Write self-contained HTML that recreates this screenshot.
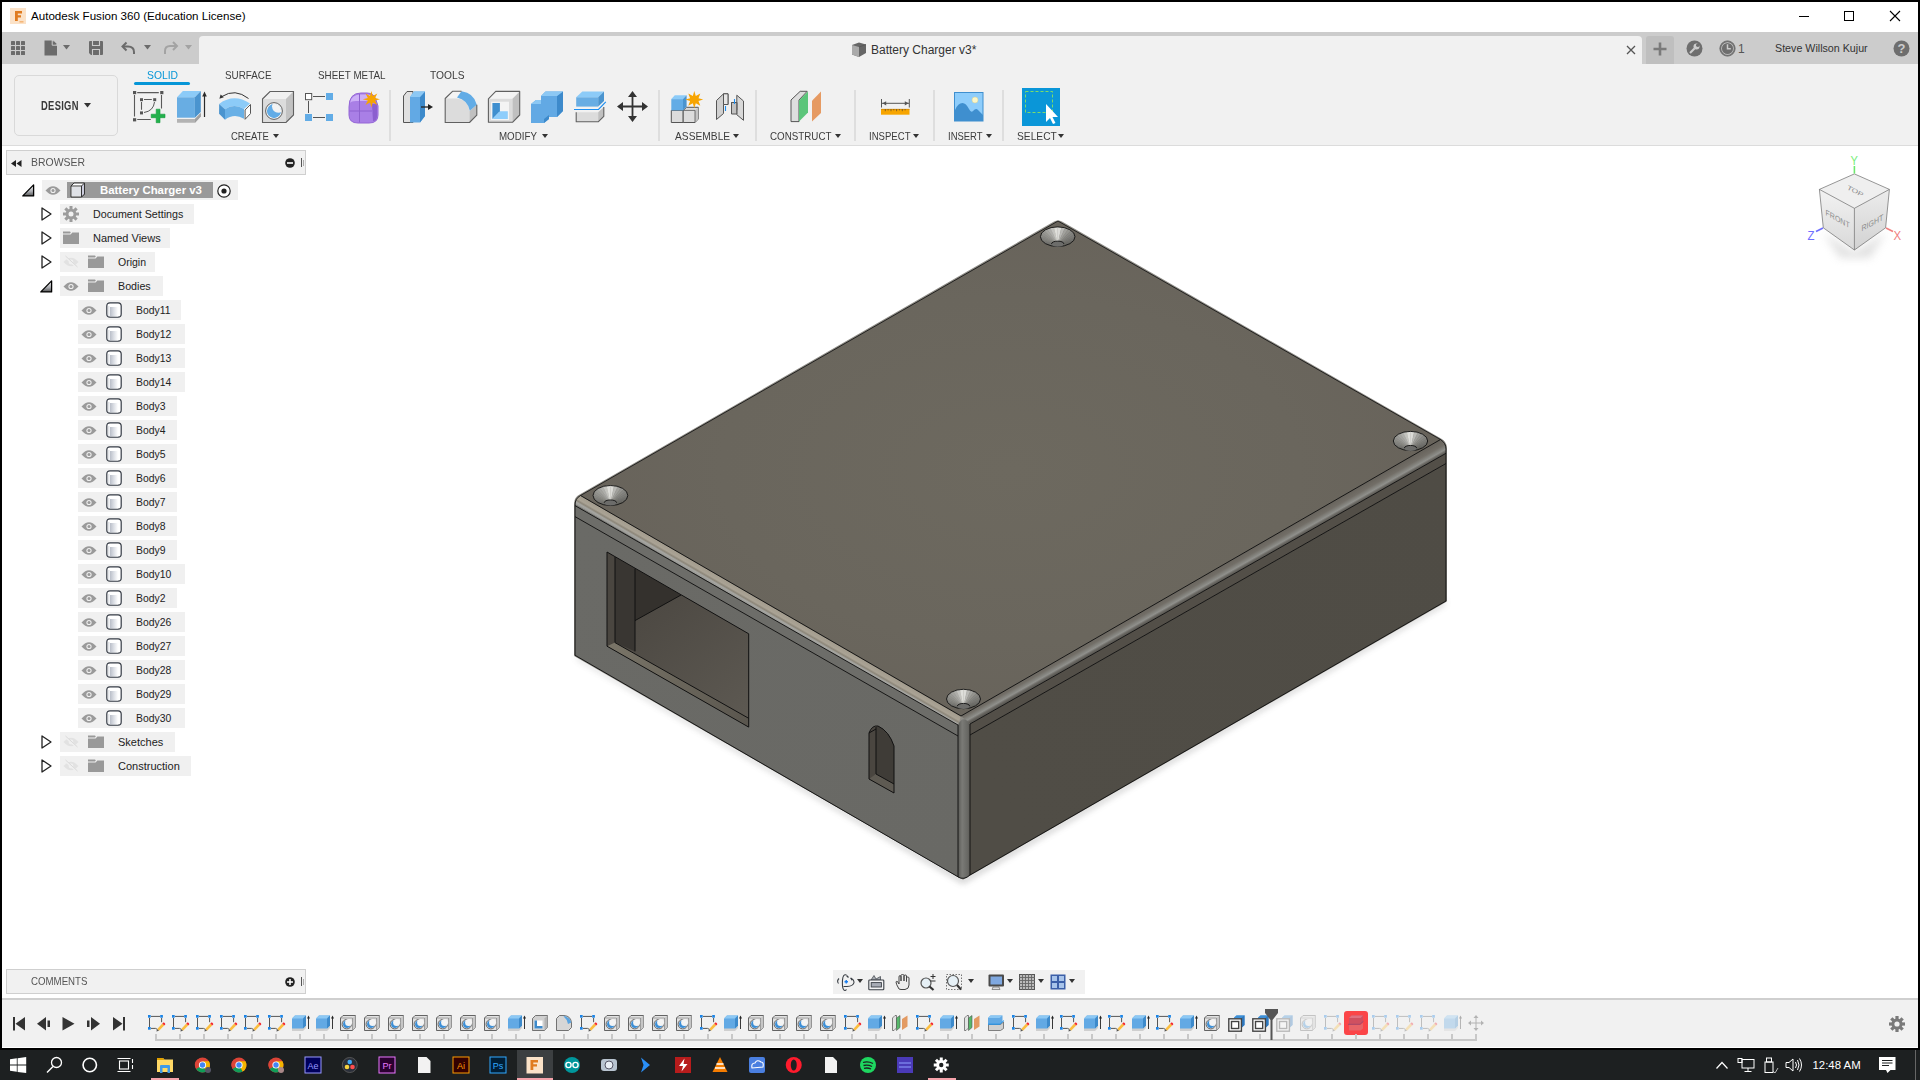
<!DOCTYPE html>
<html><head><meta charset="utf-8">
<style>
*{margin:0;padding:0;box-sizing:border-box}
html,body{width:1920px;height:1080px;overflow:hidden;background:#000;font-family:"Liberation Sans",sans-serif}
.a{position:absolute;overflow:visible}
.t{position:absolute;white-space:nowrap;line-height:1}
.rl{position:absolute;white-space:nowrap;line-height:1;font-size:11px;color:#3c3c3c;transform-origin:0 0}
.row{position:absolute;background:#f0f0f0;height:20px}
.tx{position:absolute;font-size:11px;color:#222;white-space:nowrap;line-height:1}
.sep{position:absolute;width:2px;background:#dedede;top:90px;height:51px}
</style></head><body>

<div class="a" style="left:2px;top:2px;width:1916px;height:1046px;background:#fff"></div>
<div class="a" style="left:2px;top:32px;width:1916px;height:32px;background:#cccccc"></div>
<div class="a" style="left:199px;top:36px;width:1443px;height:28px;background:#f1f1f1;border-radius:4px 4px 0 0"></div>
<div class="a" style="left:1646px;top:36px;width:28px;height:28px;background:#bfbfbf;border-radius:3px 3px 0 0"></div>
<div class="a" style="left:2px;top:64px;width:1916px;height:81px;background:#f1f1f1"></div>
<div class="a" style="left:2px;top:145px;width:1916px;height:1px;background:#dcdcdc"></div>
<div class="a" style="left:2px;top:998px;width:1916px;height:2px;background:#cfcfcf"></div>
<div class="a" style="left:2px;top:1000px;width:1916px;height:47px;background:#f1f1f1"></div>
<div class="a" style="left:0;top:1050px;width:1920px;height:30px;background:#1d2021"></div>

<svg class="a" style="left:0;top:0" width="1920" height="1080" viewBox="0 0 1920 1080">
<defs>
 <filter id="blur3" x="-20%" y="-20%" width="140%" height="140%"><feGaussianBlur stdDeviation="3"/></filter>
 <radialGradient id="gTop" gradientUnits="userSpaceOnUse" cx="1010" cy="470" r="480" gradientTransform="translate(1010 470) scale(1 .6) translate(-1010 -470)"><stop offset="0" stop-color="#6d695f"/><stop offset="0.6" stop-color="#6a665d"/><stop offset="1" stop-color="#67625a"/></radialGradient>
 <linearGradient id="gFilL" gradientUnits="userSpaceOnUse" x1="760" y1="599.2" x2="754.6" y2="608.5"><stop offset="0" stop-color="#858073"/><stop offset="0.12" stop-color="#a49d8f"/><stop offset="0.45" stop-color="#aaa395"/><stop offset="0.62" stop-color="#8c8679"/><stop offset="0.78" stop-color="#a6a6a2"/><stop offset="0.95" stop-color="#9a9a96"/><stop offset="1" stop-color="#7a7a76"/></linearGradient>
 <linearGradient id="gFilR" gradientUnits="userSpaceOnUse" x1="1200" y1="577.9" x2="1206.2" y2="588.85"><stop offset="0" stop-color="#69655e"/><stop offset="0.35" stop-color="#726e67"/><stop offset="0.62" stop-color="#878782"/><stop offset="0.72" stop-color="#90908c"/><stop offset="0.88" stop-color="#6a6863"/><stop offset="1" stop-color="#5c5a55"/></linearGradient>
 <linearGradient id="gWallL" gradientUnits="userSpaceOnUse" x1="575" y1="520" x2="963" y2="880">
  <stop offset="0" stop-color="#6a6a66"/><stop offset="1" stop-color="#696965"/>
 </linearGradient>
 <linearGradient id="gWallR" gradientUnits="userSpaceOnUse" x1="963" y1="740" x2="1446" y2="460">
  <stop offset="0" stop-color="#504d46"/><stop offset="1" stop-color="#4f4c45"/>
 </linearGradient>
 <linearGradient id="gCorner" x1="0" y1="0" x2="1" y2="0">
  <stop offset="0" stop-color="#5a5a56"/><stop offset="0.35" stop-color="#7a7a76"/><stop offset="0.8" stop-color="#686864"/><stop offset="1" stop-color="#5c5a55"/>
 </linearGradient>
 <linearGradient id="gCs" x1="0" y1="0" x2="1" y2="0"><stop offset="0" stop-color="#55534e"/><stop offset="0.2" stop-color="#8f8d87"/><stop offset="0.42" stop-color="#c9c8c3"/><stop offset="0.52" stop-color="#f0f0ec"/><stop offset="0.62" stop-color="#b9b7b1"/><stop offset="0.8" stop-color="#7f7d77"/><stop offset="1" stop-color="#5a5853"/></linearGradient>
 <linearGradient id="gFloor" gradientUnits="userSpaceOnUse" x1="640" y1="600" x2="748" y2="720">
  <stop offset="0" stop-color="#4c4842"/><stop offset="1" stop-color="#5d5952"/>
 </linearGradient>
 <linearGradient id="gSill" gradientUnits="userSpaceOnUse" x1="607" y1="644" x2="748" y2="724">
  <stop offset="0" stop-color="#7a7568"/><stop offset="1" stop-color="#5a564e"/>
 </linearGradient>
</defs>
<!-- shadow -->
<polygon points="578,659.5 963,883.5 1444,605 1446,600 963,878.5 575,655.3" fill="#808080" opacity="0.45" filter="url(#blur3)"/>
<!-- back silhouette outline halo -->
<path d="M1054,221.4 Q1058,219.6 1062,221.4 L1441,438.6 Q1447,442 1446.9,448 L1446.9,601.5 L963,879.8 L574.1,656 L574.1,503 Q574.3,497.5 579.6,494.6 Z" fill="#8e8c86"/>
<!-- walls -->
<polygon points="575,516.6 958,736 958,877 575,655.3" fill="url(#gWallL)"/>
<polygon points="970,735 1446,463.5 1446,601 970,875" fill="url(#gWallR)"/>
<!-- lid band -->
<polygon points="575,505.6 958,725 958,736 575,516.6" fill="#6d6d69"/>
<polygon points="970,724 1446,453.3 1446,463.5 970,735" fill="#534f48"/>
<!-- fillet band -->
<path d="M580.5,495.5 L961,716 L958,725 L575,505.6 Q575,498.5 580.5,495.5Z" fill="url(#gFilL)"/>
<path d="M961,716 L1440.5,439.5 Q1446,443 1446,449 L1446,453.3 L970,724Z" fill="url(#gFilR)"/>
<!-- corner strip -->
<path d="M958,725 Q963,714 970,724 L970,875 Q964,880.5 958,877 Z" fill="url(#gCorner)"/>
<!-- top face -->
<polygon points="1058,221 1440.5,439.5 961,716 580.5,495.5" fill="url(#gTop)"/>
<!-- edge lines -->
<g fill="none" stroke="#111" stroke-width="0.95" stroke-linejoin="round">
 <polyline points="580.5,495.5 1058,221 1440.5,439.5" stroke-width=".85"/>
 <polyline points="580.5,495.5 961,716 1440.5,439.5"/>
 <polyline points="575,505.6 958,725"/><polyline points="970,724 1446,453.3"/>
 <polyline points="575,516.6 958,736"/><polyline points="970,735 1446,463.5"/>
 <path d="M580.5,495.5 Q575,498.5 575,505 L575,655.3 L958,876.8"/><path d="M970,875 L1446,601 L1446,449 Q1446,443 1440.5,439.5"/>
 <line x1="958" y1="725" x2="958" y2="877"/><line x1="970" y1="724" x2="970" y2="875"/>
 <path d="M958,877 Q964,880.5 970,875"/>
</g>
<!-- rect opening -->
<polygon points="607,552 748.7,633.8 748.7,727.1 607,646.2" fill="url(#gFloor)"/>
<polygon points="615,557 681,595 635,620.6 635,568.8" fill="#34312d"/>
<polygon points="607,552 615,557 615,642.6 607,646.2" fill="#4a4640"/>
<polygon points="615,557 635,568.8 635,651.4 615,642.6" fill="#393632"/>
<polygon points="607,646.2 748.7,727.1 748.7,718.3 615,642.6" fill="url(#gSill)"/>
<g fill="none" stroke="#111" stroke-width="1">
 <polygon points="607,552 748.7,633.8 748.7,727.1 607,646.2"/>
 <polyline points="615,557 615,642.6 748.7,718.3"/>
 <polyline points="635,568.8 635,651.4"/>
 <polyline points="635,620.6 681,595"/>
</g>
<!-- slot -->
<path d="M869,779 L869,733 Q872,725 878,726 Q889,731 894,746 L894,793 Z" fill="#4a4640"/>
<path d="M876,728 L876,774 L894,784 L894,746 Q889,731 878,726 Z" fill="#3f3c37"/>
<polygon points="869,779 876,774 894,784 894,793" fill="#5e5a52"/>
<g fill="none" stroke="#111" stroke-width="1">
 <path d="M869,779 L869,733 Q872,725 878,726 Q889,731 894,746 L894,793 Z"/>
 <polyline points="876,727 876,774 894,784"/>
 <line x1="869" y1="733" x2="876" y2="729"/>
</g>
<!-- countersinks -->
<clipPath id="csc1"><ellipse cx="1057.7" cy="236.7" rx="17.3" ry="9.8"/></clipPath>
<g clip-path="url(#csc1)">
<path d="M1057.7,244.2L1057.7,256.3L1051.7,256.0Z" fill="#62625e" stroke="#62625e" stroke-width=".3"/>
<path d="M1057.7,244.2L1051.7,256.0L1045.9,255.1Z" fill="#646460" stroke="#646460" stroke-width=".3"/>
<path d="M1057.7,244.2L1045.9,255.1L1040.4,253.7Z" fill="#666662" stroke="#666662" stroke-width=".3"/>
<path d="M1057.7,244.2L1040.4,253.7L1035.5,251.7Z" fill="#686864" stroke="#686864" stroke-width=".3"/>
<path d="M1057.7,244.2L1035.5,251.7L1031.2,249.3Z" fill="#6a6a66" stroke="#6a6a66" stroke-width=".3"/>
<path d="M1057.7,244.2L1031.2,249.3L1027.7,246.5Z" fill="#6d6d69" stroke="#6d6d69" stroke-width=".3"/>
<path d="M1057.7,244.2L1027.7,246.5L1025.2,243.4Z" fill="#71716d" stroke="#71716d" stroke-width=".3"/>
<path d="M1057.7,244.2L1025.2,243.4L1023.6,240.1Z" fill="#747470" stroke="#747470" stroke-width=".3"/>
<path d="M1057.7,244.2L1023.6,240.1L1023.1,236.7Z" fill="#787874" stroke="#787874" stroke-width=".3"/>
<path d="M1057.7,244.2L1023.1,236.7L1023.6,233.3Z" fill="#7d7d79" stroke="#7d7d79" stroke-width=".3"/>
<path d="M1057.7,244.2L1023.6,233.3L1025.2,230.0Z" fill="#848480" stroke="#848480" stroke-width=".3"/>
<path d="M1057.7,244.2L1025.2,230.0L1027.7,226.9Z" fill="#8a8a86" stroke="#8a8a86" stroke-width=".3"/>
<path d="M1057.7,244.2L1027.7,226.9L1031.2,224.1Z" fill="#91918d" stroke="#91918d" stroke-width=".3"/>
<path d="M1057.7,244.2L1031.2,224.1L1035.5,221.7Z" fill="#989894" stroke="#989894" stroke-width=".3"/>
<path d="M1057.7,244.2L1035.5,221.7L1040.4,219.7Z" fill="#a3a39f" stroke="#a3a39f" stroke-width=".3"/>
<path d="M1057.7,244.2L1040.4,219.7L1045.9,218.3Z" fill="#aeaeaa" stroke="#aeaeaa" stroke-width=".3"/>
<path d="M1057.7,244.2L1045.9,218.3L1051.7,217.4Z" fill="#c3c3bf" stroke="#c3c3bf" stroke-width=".3"/>
<path d="M1057.7,244.2L1051.7,217.4L1057.7,217.1Z" fill="#dfdfdb" stroke="#dfdfdb" stroke-width=".3"/>
<path d="M1057.7,244.2L1057.7,217.1L1063.7,217.4Z" fill="#dcdcd8" stroke="#dcdcd8" stroke-width=".3"/>
<path d="M1057.7,244.2L1063.7,217.4L1069.5,218.3Z" fill="#b9b9b5" stroke="#b9b9b5" stroke-width=".3"/>
<path d="M1057.7,244.2L1069.5,218.3L1075.0,219.7Z" fill="#a1a19d" stroke="#a1a19d" stroke-width=".3"/>
<path d="M1057.7,244.2L1075.0,219.7L1079.9,221.7Z" fill="#949490" stroke="#949490" stroke-width=".3"/>
<path d="M1057.7,244.2L1079.9,221.7L1084.2,224.1Z" fill="#888884" stroke="#888884" stroke-width=".3"/>
<path d="M1057.7,244.2L1084.2,224.1L1087.7,226.9Z" fill="#82827e" stroke="#82827e" stroke-width=".3"/>
<path d="M1057.7,244.2L1087.7,226.9L1090.2,230.0Z" fill="#7c7c78" stroke="#7c7c78" stroke-width=".3"/>
<path d="M1057.7,244.2L1090.2,230.0L1091.8,233.3Z" fill="#767672" stroke="#767672" stroke-width=".3"/>
<path d="M1057.7,244.2L1091.8,233.3L1092.3,236.7Z" fill="#70706c" stroke="#70706c" stroke-width=".3"/>
<path d="M1057.7,244.2L1092.3,236.7L1091.8,240.1Z" fill="#6c6c68" stroke="#6c6c68" stroke-width=".3"/>
<path d="M1057.7,244.2L1091.8,240.1L1090.2,243.4Z" fill="#6a6a66" stroke="#6a6a66" stroke-width=".3"/>
<path d="M1057.7,244.2L1090.2,243.4L1087.7,246.5Z" fill="#686864" stroke="#686864" stroke-width=".3"/>
<path d="M1057.7,244.2L1087.7,246.5L1084.2,249.3Z" fill="#666662" stroke="#666662" stroke-width=".3"/>
<path d="M1057.7,244.2L1084.2,249.3L1079.9,251.7Z" fill="#646460" stroke="#646460" stroke-width=".3"/>
<path d="M1057.7,244.2L1079.9,251.7L1075.0,253.7Z" fill="#63635f" stroke="#63635f" stroke-width=".3"/>
<path d="M1057.7,244.2L1075.0,253.7L1069.5,255.1Z" fill="#63635f" stroke="#63635f" stroke-width=".3"/>
<path d="M1057.7,244.2L1069.5,255.1L1063.7,256.0Z" fill="#62625e" stroke="#62625e" stroke-width=".3"/>
<path d="M1057.7,244.2L1063.7,256.0L1057.7,256.3Z" fill="#62625e" stroke="#62625e" stroke-width=".3"/>
</g>
<ellipse cx="1057.7" cy="236.7" rx="17.3" ry="9.8" fill="none" stroke="#111" stroke-width=".9"/>
<ellipse cx="1057.7" cy="243.89999999999998" rx="6.2" ry="2.8" fill="#6c6c6a"/>
<path d="M1051.5,243.89999999999998 A6.2,2.8 0 0 1 1063.9,243.89999999999998" fill="none" stroke="#111" stroke-width=".9"/>
<clipPath id="csc2"><ellipse cx="610.4" cy="495.5" rx="17.4" ry="10"/></clipPath>
<g clip-path="url(#csc2)">
<path d="M610.4,503.0L610.4,515.5L604.4,515.2Z" fill="#62625e" stroke="#62625e" stroke-width=".3"/>
<path d="M610.4,503.0L604.4,515.2L598.5,514.3Z" fill="#646460" stroke="#646460" stroke-width=".3"/>
<path d="M610.4,503.0L598.5,514.3L593.0,512.8Z" fill="#666662" stroke="#666662" stroke-width=".3"/>
<path d="M610.4,503.0L593.0,512.8L588.0,510.8Z" fill="#686864" stroke="#686864" stroke-width=".3"/>
<path d="M610.4,503.0L588.0,510.8L583.7,508.4Z" fill="#6a6a66" stroke="#6a6a66" stroke-width=".3"/>
<path d="M610.4,503.0L583.7,508.4L580.3,505.5Z" fill="#6d6d69" stroke="#6d6d69" stroke-width=".3"/>
<path d="M610.4,503.0L580.3,505.5L577.7,502.3Z" fill="#71716d" stroke="#71716d" stroke-width=".3"/>
<path d="M610.4,503.0L577.7,502.3L576.1,499.0Z" fill="#747470" stroke="#747470" stroke-width=".3"/>
<path d="M610.4,503.0L576.1,499.0L575.6,495.5Z" fill="#787874" stroke="#787874" stroke-width=".3"/>
<path d="M610.4,503.0L575.6,495.5L576.1,492.0Z" fill="#7d7d79" stroke="#7d7d79" stroke-width=".3"/>
<path d="M610.4,503.0L576.1,492.0L577.7,488.7Z" fill="#848480" stroke="#848480" stroke-width=".3"/>
<path d="M610.4,503.0L577.7,488.7L580.3,485.5Z" fill="#8a8a86" stroke="#8a8a86" stroke-width=".3"/>
<path d="M610.4,503.0L580.3,485.5L583.7,482.6Z" fill="#91918d" stroke="#91918d" stroke-width=".3"/>
<path d="M610.4,503.0L583.7,482.6L588.0,480.2Z" fill="#989894" stroke="#989894" stroke-width=".3"/>
<path d="M610.4,503.0L588.0,480.2L593.0,478.2Z" fill="#a3a39f" stroke="#a3a39f" stroke-width=".3"/>
<path d="M610.4,503.0L593.0,478.2L598.5,476.7Z" fill="#aeaeaa" stroke="#aeaeaa" stroke-width=".3"/>
<path d="M610.4,503.0L598.5,476.7L604.4,475.8Z" fill="#c3c3bf" stroke="#c3c3bf" stroke-width=".3"/>
<path d="M610.4,503.0L604.4,475.8L610.4,475.5Z" fill="#dfdfdb" stroke="#dfdfdb" stroke-width=".3"/>
<path d="M610.4,503.0L610.4,475.5L616.4,475.8Z" fill="#dcdcd8" stroke="#dcdcd8" stroke-width=".3"/>
<path d="M610.4,503.0L616.4,475.8L622.3,476.7Z" fill="#b9b9b5" stroke="#b9b9b5" stroke-width=".3"/>
<path d="M610.4,503.0L622.3,476.7L627.8,478.2Z" fill="#a1a19d" stroke="#a1a19d" stroke-width=".3"/>
<path d="M610.4,503.0L627.8,478.2L632.8,480.2Z" fill="#949490" stroke="#949490" stroke-width=".3"/>
<path d="M610.4,503.0L632.8,480.2L637.1,482.6Z" fill="#888884" stroke="#888884" stroke-width=".3"/>
<path d="M610.4,503.0L637.1,482.6L640.5,485.5Z" fill="#82827e" stroke="#82827e" stroke-width=".3"/>
<path d="M610.4,503.0L640.5,485.5L643.1,488.7Z" fill="#7c7c78" stroke="#7c7c78" stroke-width=".3"/>
<path d="M610.4,503.0L643.1,488.7L644.7,492.0Z" fill="#767672" stroke="#767672" stroke-width=".3"/>
<path d="M610.4,503.0L644.7,492.0L645.2,495.5Z" fill="#70706c" stroke="#70706c" stroke-width=".3"/>
<path d="M610.4,503.0L645.2,495.5L644.7,499.0Z" fill="#6c6c68" stroke="#6c6c68" stroke-width=".3"/>
<path d="M610.4,503.0L644.7,499.0L643.1,502.3Z" fill="#6a6a66" stroke="#6a6a66" stroke-width=".3"/>
<path d="M610.4,503.0L643.1,502.3L640.5,505.5Z" fill="#686864" stroke="#686864" stroke-width=".3"/>
<path d="M610.4,503.0L640.5,505.5L637.1,508.4Z" fill="#666662" stroke="#666662" stroke-width=".3"/>
<path d="M610.4,503.0L637.1,508.4L632.8,510.8Z" fill="#646460" stroke="#646460" stroke-width=".3"/>
<path d="M610.4,503.0L632.8,510.8L627.8,512.8Z" fill="#63635f" stroke="#63635f" stroke-width=".3"/>
<path d="M610.4,503.0L627.8,512.8L622.3,514.3Z" fill="#63635f" stroke="#63635f" stroke-width=".3"/>
<path d="M610.4,503.0L622.3,514.3L616.4,515.2Z" fill="#62625e" stroke="#62625e" stroke-width=".3"/>
<path d="M610.4,503.0L616.4,515.2L610.4,515.5Z" fill="#62625e" stroke="#62625e" stroke-width=".3"/>
</g>
<ellipse cx="610.4" cy="495.5" rx="17.4" ry="10" fill="none" stroke="#111" stroke-width=".9"/>
<ellipse cx="610.4" cy="502.7" rx="6.2" ry="2.8" fill="#6c6c6a"/>
<path d="M604.1999999999999,502.7 A6.2,2.8 0 0 1 616.6,502.7" fill="none" stroke="#111" stroke-width=".9"/>
<clipPath id="csc3"><ellipse cx="1410.5" cy="441" rx="17.2" ry="9.6"/></clipPath>
<g clip-path="url(#csc3)">
<path d="M1410.5,448.5L1410.5,460.2L1404.5,459.9Z" fill="#62625e" stroke="#62625e" stroke-width=".3"/>
<path d="M1410.5,448.5L1404.5,459.9L1398.7,459.0Z" fill="#646460" stroke="#646460" stroke-width=".3"/>
<path d="M1410.5,448.5L1398.7,459.0L1393.3,457.6Z" fill="#666662" stroke="#666662" stroke-width=".3"/>
<path d="M1410.5,448.5L1393.3,457.6L1388.4,455.7Z" fill="#686864" stroke="#686864" stroke-width=".3"/>
<path d="M1410.5,448.5L1388.4,455.7L1384.1,453.3Z" fill="#6a6a66" stroke="#6a6a66" stroke-width=".3"/>
<path d="M1410.5,448.5L1384.1,453.3L1380.7,450.6Z" fill="#6d6d69" stroke="#6d6d69" stroke-width=".3"/>
<path d="M1410.5,448.5L1380.7,450.6L1378.2,447.6Z" fill="#71716d" stroke="#71716d" stroke-width=".3"/>
<path d="M1410.5,448.5L1378.2,447.6L1376.6,444.3Z" fill="#747470" stroke="#747470" stroke-width=".3"/>
<path d="M1410.5,448.5L1376.6,444.3L1376.1,441.0Z" fill="#787874" stroke="#787874" stroke-width=".3"/>
<path d="M1410.5,448.5L1376.1,441.0L1376.6,437.7Z" fill="#7d7d79" stroke="#7d7d79" stroke-width=".3"/>
<path d="M1410.5,448.5L1376.6,437.7L1378.2,434.4Z" fill="#848480" stroke="#848480" stroke-width=".3"/>
<path d="M1410.5,448.5L1378.2,434.4L1380.7,431.4Z" fill="#8a8a86" stroke="#8a8a86" stroke-width=".3"/>
<path d="M1410.5,448.5L1380.7,431.4L1384.1,428.7Z" fill="#91918d" stroke="#91918d" stroke-width=".3"/>
<path d="M1410.5,448.5L1384.1,428.7L1388.4,426.3Z" fill="#989894" stroke="#989894" stroke-width=".3"/>
<path d="M1410.5,448.5L1388.4,426.3L1393.3,424.4Z" fill="#a3a39f" stroke="#a3a39f" stroke-width=".3"/>
<path d="M1410.5,448.5L1393.3,424.4L1398.7,423.0Z" fill="#aeaeaa" stroke="#aeaeaa" stroke-width=".3"/>
<path d="M1410.5,448.5L1398.7,423.0L1404.5,422.1Z" fill="#c3c3bf" stroke="#c3c3bf" stroke-width=".3"/>
<path d="M1410.5,448.5L1404.5,422.1L1410.5,421.8Z" fill="#dfdfdb" stroke="#dfdfdb" stroke-width=".3"/>
<path d="M1410.5,448.5L1410.5,421.8L1416.5,422.1Z" fill="#dcdcd8" stroke="#dcdcd8" stroke-width=".3"/>
<path d="M1410.5,448.5L1416.5,422.1L1422.3,423.0Z" fill="#b9b9b5" stroke="#b9b9b5" stroke-width=".3"/>
<path d="M1410.5,448.5L1422.3,423.0L1427.7,424.4Z" fill="#a1a19d" stroke="#a1a19d" stroke-width=".3"/>
<path d="M1410.5,448.5L1427.7,424.4L1432.6,426.3Z" fill="#949490" stroke="#949490" stroke-width=".3"/>
<path d="M1410.5,448.5L1432.6,426.3L1436.9,428.7Z" fill="#888884" stroke="#888884" stroke-width=".3"/>
<path d="M1410.5,448.5L1436.9,428.7L1440.3,431.4Z" fill="#82827e" stroke="#82827e" stroke-width=".3"/>
<path d="M1410.5,448.5L1440.3,431.4L1442.8,434.4Z" fill="#7c7c78" stroke="#7c7c78" stroke-width=".3"/>
<path d="M1410.5,448.5L1442.8,434.4L1444.4,437.7Z" fill="#767672" stroke="#767672" stroke-width=".3"/>
<path d="M1410.5,448.5L1444.4,437.7L1444.9,441.0Z" fill="#70706c" stroke="#70706c" stroke-width=".3"/>
<path d="M1410.5,448.5L1444.9,441.0L1444.4,444.3Z" fill="#6c6c68" stroke="#6c6c68" stroke-width=".3"/>
<path d="M1410.5,448.5L1444.4,444.3L1442.8,447.6Z" fill="#6a6a66" stroke="#6a6a66" stroke-width=".3"/>
<path d="M1410.5,448.5L1442.8,447.6L1440.3,450.6Z" fill="#686864" stroke="#686864" stroke-width=".3"/>
<path d="M1410.5,448.5L1440.3,450.6L1436.9,453.3Z" fill="#666662" stroke="#666662" stroke-width=".3"/>
<path d="M1410.5,448.5L1436.9,453.3L1432.6,455.7Z" fill="#646460" stroke="#646460" stroke-width=".3"/>
<path d="M1410.5,448.5L1432.6,455.7L1427.7,457.6Z" fill="#63635f" stroke="#63635f" stroke-width=".3"/>
<path d="M1410.5,448.5L1427.7,457.6L1422.3,459.0Z" fill="#63635f" stroke="#63635f" stroke-width=".3"/>
<path d="M1410.5,448.5L1422.3,459.0L1416.5,459.9Z" fill="#62625e" stroke="#62625e" stroke-width=".3"/>
<path d="M1410.5,448.5L1416.5,459.9L1410.5,460.2Z" fill="#62625e" stroke="#62625e" stroke-width=".3"/>
</g>
<ellipse cx="1410.5" cy="441" rx="17.2" ry="9.6" fill="none" stroke="#111" stroke-width=".9"/>
<ellipse cx="1410.5" cy="448.2" rx="6.2" ry="2.8" fill="#6c6c6a"/>
<path d="M1404.3,448.2 A6.2,2.8 0 0 1 1416.7,448.2" fill="none" stroke="#111" stroke-width=".9"/>
<clipPath id="csc4"><ellipse cx="963.5" cy="699" rx="17" ry="9.7"/></clipPath>
<g clip-path="url(#csc4)">
<path d="M963.5,706.5L963.5,718.4L957.6,718.1Z" fill="#62625e" stroke="#62625e" stroke-width=".3"/>
<path d="M963.5,706.5L957.6,718.1L951.9,717.2Z" fill="#646460" stroke="#646460" stroke-width=".3"/>
<path d="M963.5,706.5L951.9,717.2L946.5,715.8Z" fill="#666662" stroke="#666662" stroke-width=".3"/>
<path d="M963.5,706.5L946.5,715.8L941.6,713.9Z" fill="#686864" stroke="#686864" stroke-width=".3"/>
<path d="M963.5,706.5L941.6,713.9L937.5,711.5Z" fill="#6a6a66" stroke="#6a6a66" stroke-width=".3"/>
<path d="M963.5,706.5L937.5,711.5L934.1,708.7Z" fill="#6d6d69" stroke="#6d6d69" stroke-width=".3"/>
<path d="M963.5,706.5L934.1,708.7L931.6,705.6Z" fill="#71716d" stroke="#71716d" stroke-width=".3"/>
<path d="M963.5,706.5L931.6,705.6L930.0,702.4Z" fill="#747470" stroke="#747470" stroke-width=".3"/>
<path d="M963.5,706.5L930.0,702.4L929.5,699.0Z" fill="#787874" stroke="#787874" stroke-width=".3"/>
<path d="M963.5,706.5L929.5,699.0L930.0,695.6Z" fill="#7d7d79" stroke="#7d7d79" stroke-width=".3"/>
<path d="M963.5,706.5L930.0,695.6L931.6,692.4Z" fill="#848480" stroke="#848480" stroke-width=".3"/>
<path d="M963.5,706.5L931.6,692.4L934.1,689.3Z" fill="#8a8a86" stroke="#8a8a86" stroke-width=".3"/>
<path d="M963.5,706.5L934.1,689.3L937.5,686.5Z" fill="#91918d" stroke="#91918d" stroke-width=".3"/>
<path d="M963.5,706.5L937.5,686.5L941.6,684.1Z" fill="#989894" stroke="#989894" stroke-width=".3"/>
<path d="M963.5,706.5L941.6,684.1L946.5,682.2Z" fill="#a3a39f" stroke="#a3a39f" stroke-width=".3"/>
<path d="M963.5,706.5L946.5,682.2L951.9,680.8Z" fill="#aeaeaa" stroke="#aeaeaa" stroke-width=".3"/>
<path d="M963.5,706.5L951.9,680.8L957.6,679.9Z" fill="#c3c3bf" stroke="#c3c3bf" stroke-width=".3"/>
<path d="M963.5,706.5L957.6,679.9L963.5,679.6Z" fill="#dfdfdb" stroke="#dfdfdb" stroke-width=".3"/>
<path d="M963.5,706.5L963.5,679.6L969.4,679.9Z" fill="#dcdcd8" stroke="#dcdcd8" stroke-width=".3"/>
<path d="M963.5,706.5L969.4,679.9L975.1,680.8Z" fill="#b9b9b5" stroke="#b9b9b5" stroke-width=".3"/>
<path d="M963.5,706.5L975.1,680.8L980.5,682.2Z" fill="#a1a19d" stroke="#a1a19d" stroke-width=".3"/>
<path d="M963.5,706.5L980.5,682.2L985.4,684.1Z" fill="#949490" stroke="#949490" stroke-width=".3"/>
<path d="M963.5,706.5L985.4,684.1L989.5,686.5Z" fill="#888884" stroke="#888884" stroke-width=".3"/>
<path d="M963.5,706.5L989.5,686.5L992.9,689.3Z" fill="#82827e" stroke="#82827e" stroke-width=".3"/>
<path d="M963.5,706.5L992.9,689.3L995.4,692.4Z" fill="#7c7c78" stroke="#7c7c78" stroke-width=".3"/>
<path d="M963.5,706.5L995.4,692.4L997.0,695.6Z" fill="#767672" stroke="#767672" stroke-width=".3"/>
<path d="M963.5,706.5L997.0,695.6L997.5,699.0Z" fill="#70706c" stroke="#70706c" stroke-width=".3"/>
<path d="M963.5,706.5L997.5,699.0L997.0,702.4Z" fill="#6c6c68" stroke="#6c6c68" stroke-width=".3"/>
<path d="M963.5,706.5L997.0,702.4L995.4,705.6Z" fill="#6a6a66" stroke="#6a6a66" stroke-width=".3"/>
<path d="M963.5,706.5L995.4,705.6L992.9,708.7Z" fill="#686864" stroke="#686864" stroke-width=".3"/>
<path d="M963.5,706.5L992.9,708.7L989.5,711.5Z" fill="#666662" stroke="#666662" stroke-width=".3"/>
<path d="M963.5,706.5L989.5,711.5L985.4,713.9Z" fill="#646460" stroke="#646460" stroke-width=".3"/>
<path d="M963.5,706.5L985.4,713.9L980.5,715.8Z" fill="#63635f" stroke="#63635f" stroke-width=".3"/>
<path d="M963.5,706.5L980.5,715.8L975.1,717.2Z" fill="#63635f" stroke="#63635f" stroke-width=".3"/>
<path d="M963.5,706.5L975.1,717.2L969.4,718.1Z" fill="#62625e" stroke="#62625e" stroke-width=".3"/>
<path d="M963.5,706.5L969.4,718.1L963.5,718.4Z" fill="#62625e" stroke="#62625e" stroke-width=".3"/>
</g>
<ellipse cx="963.5" cy="699" rx="17" ry="9.7" fill="none" stroke="#111" stroke-width=".9"/>
<ellipse cx="963.5" cy="706.2" rx="6.2" ry="2.8" fill="#6c6c6a"/>
<path d="M957.3,706.2 A6.2,2.8 0 0 1 969.7,706.2" fill="none" stroke="#111" stroke-width=".9"/>
</svg>
<!-- fusion logo -->
<svg class="a" style="left:10px;top:8px" width="16" height="16" viewBox="0 0 16 16">
 <rect x="0" y="0" width="16" height="16" fill="#fbe2c8"/>
 <path d="M5,3 H12 V5.5 H7.8 V7.2 H11 V9.4 H7.8 V13 H5 Z" fill="#e07b1f"/>
 <rect x="9.5" y="13" width="4" height="1.6" fill="#f5b77a"/>
</svg>
<div class="t" style="left:31px;top:10px;font-size:11.6px;color:#000">Autodesk Fusion 360 (Education License)</div>
<!-- window controls -->
<div class="a" style="left:1799px;top:16px;width:10px;height:1px;background:#000"></div>
<div class="a" style="left:1844px;top:11px;width:10px;height:10px;border:1px solid #000"></div>
<svg class="a" style="left:1889px;top:10px" width="12" height="12" viewBox="0 0 12 12"><path d="M1,1 L11,11 M11,1 L1,11" stroke="#000" stroke-width="1.1"/></svg>
<!-- quick access -->
<svg class="a" style="left:11px;top:41px" width="14" height="14" viewBox="0 0 14 14" fill="#6b6b6b">
 <rect x="0" y="0" width="4" height="4" rx=".6"/><rect x="5" y="0" width="4" height="4" rx=".6"/><rect x="10" y="0" width="4" height="4" rx=".6"/>
 <rect x="0" y="5" width="4" height="4" rx=".6"/><rect x="5" y="5" width="4" height="4" rx=".6"/><rect x="10" y="5" width="4" height="4" rx=".6"/>
 <rect x="0" y="10" width="4" height="4" rx=".6"/><rect x="5" y="10" width="4" height="4" rx=".6"/><rect x="10" y="10" width="4" height="4" rx=".6"/>
</svg>
<svg class="a" style="left:44px;top:40px" width="14" height="16" viewBox="0 0 14 16"><path d="M0.5,0.5 H8 L13,5.5 V15.5 H0.5 Z" fill="#6b6b6b"/><path d="M9.3,0.5 L13,4.2 H9.3 Z" fill="#6b6b6b"/><path d="M8.2,0 V5.2 H13.5" stroke="#cccccc" stroke-width="1" fill="none"/></svg>
<svg class="a" style="left:63px;top:45px" width="7" height="5" viewBox="0 0 7 5"><path d="M0,0 H7 L3.5,4.5Z" fill="#6b6b6b"/></svg>
<svg class="a" style="left:89px;top:41px" width="14" height="14" viewBox="0 0 14 14"><path d="M0,1 Q0,0 1,0 H13 Q14,0 14,1 V13 Q14,14 13,14 H2 L0,12 Z" fill="#6b6b6b"/><path d="M3.5,0 V4.5 H10.5 V0" stroke="#cccccc" stroke-width="1.1" fill="none"/><path d="M3.5,14 V8.5 H10.5 V14" stroke="#cccccc" stroke-width="1.1" fill="none"/></svg>
<svg class="a" style="left:121px;top:41px" width="15" height="14" viewBox="0 0 15 14"><path d="M5.5,1.5 L1.5,5.5 L5.5,9.5" stroke="#6b6b6b" stroke-width="2" fill="none"/><path d="M2,5.5 H7 Q13,5.5 13,11 V13" stroke="#6b6b6b" stroke-width="2" fill="none"/></svg>
<svg class="a" style="left:144px;top:45px" width="7" height="5" viewBox="0 0 7 5"><path d="M0,0 H7 L3.5,4.5Z" fill="#6b6b6b"/></svg>
<svg class="a" style="left:163px;top:41px" width="15" height="14" viewBox="0 0 15 14"><path d="M10,1 L14,5 L10,9" stroke="#a3a3a3" stroke-width="2" fill="none"/><path d="M13.5,5 H7 Q2,5 2,10 V13" stroke="#a3a3a3" stroke-width="2" fill="none"/></svg>
<svg class="a" style="left:185px;top:45px" width="7" height="5" viewBox="0 0 7 5"><path d="M0,0 H7 L3.5,4.5Z" fill="#a3a3a3"/></svg>
<!-- doc tab -->
<svg class="a" style="left:851px;top:42px" width="16" height="16" viewBox="0 0 16 16"><path d="M1,3 L8,0.5 L15,2.5 V11 L8,15 L1,12.5 Z" fill="#666"/><path d="M1,3 L8,5 V15 L1,12.5Z" fill="#aaa"/><path d="M8,5 L15,2.5" stroke="#555" stroke-width=".8"/></svg>
<div class="t" style="left:871px;top:44px;font-size:12px;color:#333">Battery Charger v3*</div>
<svg class="a" style="left:1626px;top:45px" width="10" height="10" viewBox="0 0 10 10"><path d="M1,1 L9,9 M9,1 L1,9" stroke="#555" stroke-width="1.3"/></svg>
<svg class="a" style="left:1653px;top:42px" width="14" height="14" viewBox="0 0 14 14"><path d="M7,0.5 V13.5 M0.5,7 H13.5" stroke="#7a7a7a" stroke-width="2.6"/></svg>
<svg class="a" style="left:1686px;top:40px" width="17" height="17" viewBox="0 0 17 17"><circle cx="8.5" cy="8.5" r="8" fill="#6e6e6e"/><path d="M4,13 L8.5,8.5" stroke="#cccccc" stroke-width="2.2"/><circle cx="10.5" cy="6.5" r="3" fill="#cccccc"/><circle cx="11.8" cy="5.2" r="1.8" fill="#6e6e6e"/></svg>
<svg class="a" style="left:1719px;top:40px" width="17" height="17" viewBox="0 0 17 17"><circle cx="8.5" cy="8.5" r="7.6" fill="#6e6e6e" stroke="#6e6e6e" stroke-width="1"/><circle cx="8.5" cy="8.5" r="6.3" fill="#cccccc"/><circle cx="8.5" cy="8.5" r="5.6" fill="#6e6e6e"/><path d="M8.5,4.3 V8.8 H11.8" stroke="#cccccc" stroke-width="1.5" fill="none"/></svg>
<div class="t" style="left:1738px;top:43px;font-size:12px;color:#555">1</div>
<div class="t" style="left:1775px;top:43px;font-size:10.7px;color:#333">Steve Willson Kujur</div>
<svg class="a" style="left:1893px;top:40px" width="17" height="17" viewBox="0 0 17 17"><circle cx="8.5" cy="8.5" r="8" fill="#6e6e6e"/><text x="8.5" y="13.2" font-size="13" font-weight="bold" text-anchor="middle" fill="#cccccc" font-family="Liberation Sans">?</text></svg>
<!-- DESIGN -->
<div class="a" style="left:14px;top:75px;width:104px;height:61px;border:1px solid #d9d9d9;border-radius:5px"></div>
<div class="t" style="left:41px;top:100px;font-size:12px;font-weight:bold;letter-spacing:.4px;color:#383838;transform:scaleX(.78);transform-origin:0 0">DESIGN</div>
<svg class="a" style="left:84px;top:103px" width="7" height="5" viewBox="0 0 7 5"><path d="M0,0 H7 L3.5,4.5Z" fill="#333"/></svg>
<!-- tabs -->
<div class="rl" style="left:147px;top:70px;color:#0696d7;transform:scaleX(.94)">SOLID</div>
<div class="a" style="left:134px;top:82px;width:56px;height:3px;background:#0696d7;border-radius:1.5px"></div>
<div class="rl" style="left:225px;top:70px;transform:scaleX(.895)">SURFACE</div>
<div class="rl" style="left:318px;top:70px;transform:scaleX(.895)">SHEET METAL</div>
<div class="rl" style="left:430px;top:70px;transform:scaleX(.93)">TOOLS</div>
<!-- group labels -->
<div class="rl" style="left:231px;top:131px;transform:scaleX(.865)">CREATE</div>
<svg class="a" style="left:273px;top:134px" width="6" height="4" viewBox="0 0 6 4"><path d="M0,0 H6 L3,4Z" fill="#333"/></svg>
<div class="rl" style="left:499px;top:131px;transform:scaleX(.886)">MODIFY</div>
<svg class="a" style="left:542px;top:134px" width="6" height="4" viewBox="0 0 6 4"><path d="M0,0 H6 L3,4Z" fill="#333"/></svg>
<div class="rl" style="left:675px;top:131px;transform:scaleX(.93)">ASSEMBLE</div>
<svg class="a" style="left:733px;top:134px" width="6" height="4" viewBox="0 0 6 4"><path d="M0,0 H6 L3,4Z" fill="#333"/></svg>
<div class="rl" style="left:770px;top:131px;transform:scaleX(.89)">CONSTRUCT</div>
<svg class="a" style="left:835px;top:134px" width="6" height="4" viewBox="0 0 6 4"><path d="M0,0 H6 L3,4Z" fill="#333"/></svg>
<div class="rl" style="left:869px;top:131px;transform:scaleX(.87)">INSPECT</div>
<svg class="a" style="left:913px;top:134px" width="6" height="4" viewBox="0 0 6 4"><path d="M0,0 H6 L3,4Z" fill="#333"/></svg>
<div class="rl" style="left:948px;top:131px;transform:scaleX(.86)">INSERT</div>
<svg class="a" style="left:986px;top:134px" width="6" height="4" viewBox="0 0 6 4"><path d="M0,0 H6 L3,4Z" fill="#333"/></svg>
<div class="rl" style="left:1017px;top:131px;transform:scaleX(.93)">SELECT</div>
<svg class="a" style="left:1058px;top:134px" width="6" height="4" viewBox="0 0 6 4"><path d="M0,0 H6 L3,4Z" fill="#333"/></svg>
<!-- separators -->
<div class="sep" style="left:389px"></div>
<div class="sep" style="left:658px"></div>
<div class="sep" style="left:755px"></div>
<div class="sep" style="left:854px"></div>
<div class="sep" style="left:933px"></div>
<div class="sep" style="left:1002px"></div>
<!-- icons -->
<svg class="a" style="left:0;top:0" width="1100" height="130" viewBox="0 0 1100 130">
<defs>
 <linearGradient id="rbB" x1="0" y1="0" x2="1" y2="1"><stop offset="0" stop-color="#7cc0f0"/><stop offset="1" stop-color="#4a9ad8"/></linearGradient>
</defs>
<!-- sketch -->
<g transform="translate(128,86)">
 <g fill="#555"><rect x="5" y="5" width="3.2" height="3.2"/><rect x="32.2" y="5" width="3.2" height="3.2"/><rect x="5" y="32.2" width="3.2" height="3.2"/>
 <rect x="12" y="12.2" width="3" height="3"/><rect x="25.2" y="12.2" width="3" height="3"/><rect x="12" y="25.4" width="3" height="3"/></g>
 <path d="M9.2,6.6 H30.8 M6.5,9 V30.5 M33.5,9 V22.5 M9.2,33.5 H22.8 M16,13.5 H23.8 M13.5,16 V23.8" stroke="#5a5a5a" stroke-width="1.1" fill="none"/>
 <path d="M26.5,16 Q25.5,25 16,26.5" stroke="#5a5a5a" stroke-width="1" fill="none"/>
 <path d="M28.2,23.2 H32 V28.2 H37 V31.7 H32 V36.7 H28.2 V31.7 H23.2 V28.2 H28.2Z" fill="#22b14c" stroke="#139a3a" stroke-width=".6"/>
</g>
<!-- extrude -->
<g transform="translate(128,86)">
 <path d="M49,119 H67 L72.8,113 V116.5 L67,122.7 H49Z" transform="translate(0,-86)" fill="#b3b3b3"/>
 <path d="M67,122.7 L72.8,116.5 V113 L67,119Z" transform="translate(0,-86)" fill="#a0a0a0"/>
 <path d="M49,11.2 H66.9 V31.7 H49Z" fill="#68ade3"/>
 <path d="M49,11.2 L54.9,5 H72.8 L66.9,11.2Z" fill="#8ccbf8"/>
 <path d="M66.9,11.2 L72.8,5 V26 L66.9,31.7Z" fill="#4a94cf"/>
 <path d="M76.5,9 V31" stroke="#2a2a2a" stroke-width="1.2"/><path d="M74.2,10.5 L76.5,5.5 L78.8,10.5Z" fill="#2a2a2a"/>
</g>
<!-- revolve -->
<g transform="translate(214,86)">
 <path d="M5.1,17.9 Q20,7 36,17.5 L30,23 Q20,17 11,23.3Z" fill="#8ccbf8"/>
 <path d="M11,23.3 Q20,17 30,23 V32.7 Q20,27 11,33.8Z" fill="#69b0e6"/>
 <path d="M5.1,17.9 L11,23.3 V33.8 L5.1,27.7Z" fill="#4a94cf"/>
 <path d="M31.1,24 L36.5,18.5 V27.6 L31.1,33.3Z" fill="#fff" stroke="#555" stroke-width="1"/>
 <path d="M34.5,12.5 Q21,2 8,10.5" stroke="#333" stroke-width="1" fill="none"/>
 <path d="M5.4,12.8 L6.6,8.4 L9.8,11.3Z" fill="#333"/>
</g>
<!-- hole -->
<g transform="translate(262,91)">
 <path d="M0.5,8 L8,0.5 H31.5 V24 L24,31.5 H0.5Z" fill="#dcdcdc"/>
 <path d="M0.5,8 L8,0.5 H31.5 L24,8Z" fill="#f0f0f0"/>
 <path d="M24,8 L31.5,0.5 V24 L24,31.5Z" fill="#c2c2c2"/>
 <path d="M0.5,8 L8,0.5 H31.5 V24 L24,31.5 H0.5Z" fill="none" stroke="#606060" stroke-width="1.1"/>
 <clipPath id="holeclip"><circle cx="12" cy="20" r="7.2"/></clipPath>
 <circle cx="12" cy="20" r="8.4" fill="#f2f2f2"/>
 <g clip-path="url(#holeclip)"><circle cx="12" cy="20" r="7.2" fill="#62ace6"/><circle cx="16.2" cy="15.5" r="6.2" fill="#f2f2f2"/></g>
 <circle cx="12" cy="20" r="8.4" fill="none" stroke="#606060" stroke-width="1"/>
</g>
<!-- pattern -->
<g>
 <rect x="305.5" y="93.5" width="6.2" height="6.2" fill="#fff" stroke="#555" stroke-width="1"/>
 <rect x="326" y="93" width="7" height="7" fill="#62ace6"/><rect x="305" y="114" width="7" height="7" fill="#62ace6"/><rect x="326" y="114" width="7" height="7" fill="#62ace6"/>
 <path d="M313,96.5 H325 M308.5,101 V113 M313,117.5 H325" stroke="#555" stroke-width="1"/>
</g>
<!-- form -->
<g>
 <path d="M349,107 Q349,93 361,93 H367 Q374,93 376,100 L378,106 V115 Q378,123 369,123 H358 Q349,123 349,115Z" fill="#a97fe6" stroke="#9466d6" stroke-width="1"/>
 <path d="M350,103 Q351,94.5 361,94.5 H367 Q372,94.5 374,99 L371,102 Q369,101 366,101 H356 Q351,101 350,103Z" fill="#cdb0f7"/>
 <path d="M372,104 L377,104 V116 Q377,121 373,121Z" fill="#8c5fcf"/>
 <path d="M359.5,94 V122.5 M349.5,111 H372" stroke="#8e62cf" stroke-width="1"/>
 <path d="M371.4,91 L372.8,96 L377.3,93.6 L375,98 L380,99.2 L375,100.6 L377.3,105 L372.8,102.5 L371.4,107.5 L370,102.5 L365.5,105 L367.8,100.6 L362.8,99.2 L367.8,98 L365.5,93.6 L370,96Z" fill="#f7a400"/>
</g>
<!-- press pull -->
<g transform="translate(403,91)">
 <path d="M0.5,5 L4,0.5 H10 V31.5 H0.5Z" fill="#e0e0e0" stroke="#555" stroke-width="1"/>
 <path d="M7,6 L11,0.5 H22 V25 L17,31.5 H7Z" fill="#62a9e4"/>
 <path d="M17,6 L22,0.5 V25 L17,31.5Z" fill="#3d8acb"/>
 <path d="M7,6 L11,0.5 H22 L17,6Z" fill="#8cc8f4"/>
 <path d="M18,16 H26" stroke="#222" stroke-width="1.3"/><path d="M25,13 L30,16 L25,19Z" fill="#222"/>
</g>
<!-- fillet -->
<g>
 <path d="M445.2,98.5 L452.5,91.3 H461.5 L457,97.6 Q450,98.5 445.2,98.5Z" fill="#f4f4f4"/>
 <path d="M445.2,98.5 H457 Q468.5,100 469.5,111 V122.5 H445.2Z" fill="#dcdcdc"/>
 <path d="M469.5,111 L476.8,104.7 V115.2 L469.5,122.5Z" fill="#c0c0c0"/>
 <path d="M461.5,91.3 Q474,93 476.8,104.7 L469.8,110.8 Q467.5,100 457,97.6Z" fill="#62ace6"/>
 <path d="M461.5,91.3 H452.5 L445.2,98.5 V122.5 H469.5 L476.8,115.2 V104.7" fill="none" stroke="#606060" stroke-width="1.1" stroke-linejoin="round"/>
</g>
<!-- shell -->
<g>
 <path d="M488.4,98.8 L495.7,91.4 H519.7 L512.5,98.8Z" fill="#f4f4f4"/>
 <path d="M488.4,98.8 H512.5 V122.3 H488.4Z" fill="#dcdcdc"/>
 <path d="M512.5,98.8 L519.7,91.4 V115 L512.5,122.3Z" fill="#c0c0c0"/>
 <path d="M488.4,98.8 L495.7,91.4 H519.7 V115 L512.5,122.3 H488.4Z" fill="none" stroke="#606060" stroke-width="1.1" stroke-linejoin="round"/>
 <rect x="491" y="101.7" width="18" height="18.3" fill="#f4f4f4"/>
 <path d="M492.4,103 H499.9 V111.3 L492.4,118.9Z" fill="#3f8fcf"/>
 <path d="M492.4,118.9 L499.9,111.3 H507.8 V118.9Z" fill="#8ecdfb"/>
</g>
<!-- combine -->
<g transform="translate(531,91)">
 <path d="M10,5 L14.5,0.5 H32 V20 L26,26 H10Z" fill="#62a9e4"/>
 <path d="M26,5 L32,0.5 V20 L26,26Z" fill="#3d8acb"/>
 <path d="M10,5 L14.5,0.5 H32 L26,5Z" fill="#8cc8f4"/>
 <path d="M0,13 L5,9 H18 V28 L13,32 H0Z" fill="#62a9e4"/>
 <path d="M0,13 L5,9 H10 V13Z" fill="#8cc8f4"/>
 <path d="M13,28 L18,24 V28 L13,32Z" fill="#3d8acb"/>
</g>
<!-- split -->
<g>
 <path d="M576.2,112.3 H598.2 V121.8 H576.2Z" fill="#dcdcdc"/>
 <path d="M598.2,112.3 L603.8,107 V116.3 L598.2,121.8Z" fill="#c0c0c0"/>
 <path d="M576.2,112.3 V121.8 H598.2 L603.8,116.3 V107" fill="none" stroke="#606060" stroke-width="1.1" stroke-linejoin="round"/>
 <path d="M576.2,97.2 H598.2 V106.6 H576.2Z" fill="#68ade3"/>
 <path d="M576.2,97.2 L582.3,91.4 H604 L598.2,97.2Z" fill="#8ccbf8"/>
 <path d="M598.2,97.2 L604,91.4 V101 L598.2,106.6Z" fill="#4a94cf"/>
 <path d="M574,109.5 H598.5 L605.8,101.8" fill="none" stroke="#f4f4f4" stroke-width="2.6"/>
 <path d="M574,109.5 H598.5 L605.8,101.8" fill="none" stroke="#1e8ff0" stroke-width="1.2"/>
</g>
<!-- move -->
<g transform="translate(617,91)">
 <path d="M15.5,4 V27 M4,15.5 H27" stroke="#333" stroke-width="1.8"/>
 <path d="M15.5,0 L20,6 H11Z M15.5,31 L20,25 H11Z M0,15.5 L6,11 V20Z M31,15.5 L25,11 V20Z" fill="#333"/>
</g>
<!-- new component -->
<g>
 <path d="M671.3,110.4 H683.2 V122.5 H671.3Z" fill="#dcdcdc" stroke="#555" stroke-width="1"/>
 <path d="M683.2,110.4 L686.5,107.3 H698.3 V119 L695,122.5 H683.2Z" fill="#dcdcdc" stroke="#555" stroke-width="1"/>
 <path d="M695,110.4 L698.3,107.3 V119 L695,122.5Z" fill="#c4c4c4"/>
 <path d="M683.2,110.4 H695 V122.5" stroke="#555" stroke-width=".8" fill="none"/>
 <path d="M671.3,99.1 H683 V110.4 H671.3Z" fill="#62ace6"/>
 <path d="M671.3,99.1 L674.8,95.3 H686.6 L683,99.1Z" fill="#8ccbf8"/>
 <path d="M683,99.1 L686.6,95.3 V106.5 L683,110.4Z" fill="#4a94cf"/>
 <path d="M694.3,91 L695.8,96 L700.3,93.5 L698.5,98.2 L703.2,99.6 L698.5,101 L700.3,105.7 L695.8,103.2 L694.3,108.2 L692.8,103.2 L688.3,105.7 L690.1,101 L685.4,99.6 L690.1,98.2 L688.3,93.5 L692.8,96Z" fill="#f7a400"/>
</g>
<!-- joint -->
<g stroke="#555" stroke-width="1" stroke-linejoin="round">
 <path d="M716.5,119.5 V100.5 L723.5,93.8 H728 V104.5 H723.5 V113.5Z" fill="#d0d0d0"/>
 <path d="M723.5,93.8 H728 V104.5 H723.5Z" fill="#e6e6e6"/>
 <path d="M743.5,120.3 V101 L736.8,95.2 V110 H731.5 V102.5 H736.8 V114.7Z" fill="#d8d8d8"/>
 <path d="M731.5,102.5 H736.8 V114 H731.5Z" fill="#c2c2c2"/>
</g>
<path d="M725.5,106 V111 M734.5,99 V104" stroke="#1e8ff0" stroke-width="1.1"/>
<!-- construct -->
<g>
 <path d="M791,100 L800.2,91.3 H807.2 L799,100 V121.6 H791Z" fill="#dedede" stroke="#555" stroke-width="1" stroke-linejoin="round"/>
 <path d="M799,100.5 L808,91.5 V112.5 L799,121.6Z" fill="#5bc57a"/>
 <path d="M812,100.8 L821,91.5 V113 L812,121.5Z" fill="#e69a62"/>
</g>
<!-- measure -->
<g transform="translate(881,98)">
 <path d="M1,5.3 H28" stroke="#555" stroke-width="1"/><path d="M0.5,1 V9.5 M28.3,1 V9.5" stroke="#555" stroke-width="1"/>
 <path d="M1.5,5.3 L5.2,3.2 V7.4Z M27.5,5.3 L23.8,3.2 V7.4Z" fill="#555"/>
 <rect x="0" y="11" width="28.5" height="5.7" fill="#f7a500"/>
 <path d="M0,11.3 H28.5" stroke="#c98000" stroke-width=".6"/>
 <path d="M4.3,11 V13.2 M7.1,11 V12.4 M10,11 V13.2 M12.8,11 V12.4 M15.6,11 V13.2 M18.4,11 V12.4 M21.3,11 V13.2 M24.1,11 V12.4" stroke="#7a5a20" stroke-width=".9"/>
</g>
<!-- insert -->
<g transform="translate(954,92)">
 <rect x="0.5" y="0.5" width="28.5" height="28.5" fill="#8ecdfb" stroke="#3f8fcf" stroke-width="1"/>
 <path d="M1,18 Q4,11 8.5,11 Q12,11 15,17 Q17,21 19,19 Q22,15.5 24,18 L29,23 V29 H1Z" fill="#3f8fcf"/>
 <circle cx="21" cy="8" r="3" fill="#fbf6c8" stroke="#d8cf90" stroke-width=".5"/>
</g>
<!-- select -->
<g transform="translate(1022,88)">
 <rect x="0" y="0" width="38" height="38" fill="#0a96d8"/>
 <rect x="3.5" y="3.5" width="27" height="21" fill="none" stroke="#7ddc6a" stroke-width="1" stroke-dasharray="3,2"/>
 <path d="M24,16 V34 L28,30 L31,36 L33.5,35 L30.5,29 L36,29Z" fill="#fff"/>
</g>
</svg>
<div class="a" style="left:6px;top:150px;width:300px;height:25px;border:1px solid #cfcfcf;background:#f1f1f1"></div>
<svg class="a" style="left:11px;top:160px" width="11" height="7" viewBox="0 0 11 7"><path d="M0,3.5 L5,0 V7Z M5.5,3.5 L10.5,0 V7Z" fill="#222"/></svg>
<div class="rl" style="left:31px;top:157px;color:#555;transform:scaleX(.95)">BROWSER</div>
<svg class="a" style="left:285px;top:158px" width="10" height="10" viewBox="0 0 10 10"><circle cx="5" cy="5" r="4.8" fill="#222"/><rect x="2" y="4.2" width="6" height="1.6" fill="#fff"/></svg>
<div class="a" style="left:301px;top:158px;width:1px;height:9px;background:#555"></div><div class="a" style="left:303px;top:160px;width:1px;height:6px;background:#aaa"></div>
<svg class="a" style="left:22px;top:184px" width="13" height="13" viewBox="0 0 13 13"><defs><linearGradient id="cg1" x1="0" y1="0" x2="0" y2="1"><stop offset="0" stop-color="#fff"/><stop offset=".6" stop-color="#a9abb0"/><stop offset="1" stop-color="#555"/></linearGradient></defs><path d="M0.8,11.9 L11.6,0.9 V11.9Z" fill="url(#cg1)" stroke="#000" stroke-width="1.3" stroke-linejoin="round"/></svg>
<div class="row" style="left:42px;top:180px;width:196px"></div>
<svg class="a" style="left:45px;top:185px" width="16" height="11" viewBox="0 0 16 11"><path d="M0.5,5.5 Q8,-3 15.5,5.5 Q8,14 0.5,5.5Z" fill="#9a9a9a"/><circle cx="8" cy="5.5" r="2.6" fill="#f0f0f0"/><circle cx="8" cy="5.5" r="1.5" fill="#9a9a9a"/></svg>
<div class="a" style="left:67px;top:182px;width:146px;height:16px;background:#999"></div>
<svg class="a" style="left:70px;top:182px" width="16" height="16" viewBox="0 0 16 16"><path d="M1,4 L4,1 H14.5 V12 L11.5,15 H1Z" fill="#fff" stroke="#333" stroke-width="1"/><path d="M11.5,4 L14.5,1 V12 L11.5,15Z" fill="#ccd" stroke="#333" stroke-width="1"/><path d="M1,4 H11.5 V15" stroke="#333" stroke-width="1" fill="none"/><path d="M2,5 H11 V14 H2Z" fill="#dfe1e6"/></svg>
<div class="tx" style="left:100px;top:185px;color:#fff;font-weight:bold;font-size:11.4px">Battery Charger v3</div>
<svg class="a" style="left:217px;top:184px" width="14" height="14" viewBox="0 0 14 14"><circle cx="7" cy="7" r="6.2" fill="#fff" stroke="#222" stroke-width="1.2"/><circle cx="7" cy="7" r="2.6" fill="#222"/></svg>
<svg class="a" style="left:41px;top:207px" width="11" height="14" viewBox="0 0 11 14"><path d="M1,1 L10,7 L1,13Z" fill="#fff" stroke="#222" stroke-width="1.3" stroke-linejoin="round"/></svg>
<div class="row" style="left:60px;top:204px;width:134px"></div>
<svg class="a" style="left:63px;top:206px" width="16" height="16" viewBox="0 0 16 16"><g fill="#9c9c9c"><circle cx="8" cy="8" r="5.3"/><rect x="6.5" y="0" width="3" height="16"/><rect x="0" y="6.5" width="16" height="3"/><rect x="6.5" y="0" width="3" height="16" transform="rotate(45 8 8)"/><rect x="6.5" y="0" width="3" height="16" transform="rotate(-45 8 8)"/></g><circle cx="8" cy="8" r="2.5" fill="#f0f0f0"/></svg>
<div class="tx" style="left:93px;top:209px;font-size:10.7px">Document Settings</div>
<svg class="a" style="left:41px;top:231px" width="11" height="14" viewBox="0 0 11 14"><path d="M1,1 L10,7 L1,13Z" fill="#fff" stroke="#222" stroke-width="1.3" stroke-linejoin="round"/></svg>
<div class="row" style="left:60px;top:228px;width:110px"></div>
<svg class="a" style="left:63px;top:231px" width="16" height="13" viewBox="0 0 16 13"><path d="M0,0.4 H7 L7.8,1.4 L7,2.4 H0Z" fill="#999"/><path d="M0,3.6 H7.6 L9.4,1.4 H16 V13 H0Z" fill="#999"/></svg>
<div class="tx" style="left:93px;top:233px;">Named Views</div>
<svg class="a" style="left:41px;top:255px" width="11" height="14" viewBox="0 0 11 14"><path d="M1,1 L10,7 L1,13Z" fill="#fff" stroke="#222" stroke-width="1.3" stroke-linejoin="round"/></svg>
<div class="row" style="left:60px;top:252px;width:95px"></div>
<svg class="a" style="left:63px;top:256px" width="16" height="12" viewBox="0 0 16 12"><path d="M0.5,6 Q8,-2.5 15.5,6 Q8,14.5 0.5,6Z" fill="#e2e2e2"/><circle cx="8" cy="6" r="2.4" fill="#f0f0f0"/><path d="M2,0.5 L14,11.5" stroke="#f0f0f0" stroke-width="2"/><path d="M2.5,0 L14.5,11" stroke="#dadada" stroke-width="1"/></svg>
<svg class="a" style="left:88px;top:255px" width="16" height="13" viewBox="0 0 16 13"><path d="M0,0.4 H7 L7.8,1.4 L7,2.4 H0Z" fill="#999"/><path d="M0,3.6 H7.6 L9.4,1.4 H16 V13 H0Z" fill="#999"/></svg>
<div class="tx" style="left:118px;top:257px;font-size:10.5px">Origin</div>
<svg class="a" style="left:40px;top:280px" width="13" height="13" viewBox="0 0 13 13"><defs><linearGradient id="cg2" x1="0" y1="0" x2="0" y2="1"><stop offset="0" stop-color="#fff"/><stop offset=".6" stop-color="#a9abb0"/><stop offset="1" stop-color="#555"/></linearGradient></defs><path d="M0.8,11.9 L11.6,0.9 V11.9Z" fill="url(#cg2)" stroke="#000" stroke-width="1.3" stroke-linejoin="round"/></svg>
<div class="row" style="left:60px;top:276px;width:103px"></div>
<svg class="a" style="left:63px;top:281px" width="16" height="11" viewBox="0 0 16 11"><path d="M0.5,5.5 Q8,-3 15.5,5.5 Q8,14 0.5,5.5Z" fill="#9a9a9a"/><circle cx="8" cy="5.5" r="2.6" fill="#f0f0f0"/><circle cx="8" cy="5.5" r="1.5" fill="#9a9a9a"/></svg>
<svg class="a" style="left:88px;top:279px" width="16" height="13" viewBox="0 0 16 13"><path d="M0,0.4 H7 L7.8,1.4 L7,2.4 H0Z" fill="#999"/><path d="M0,3.6 H7.6 L9.4,1.4 H16 V13 H0Z" fill="#999"/></svg>
<div class="tx" style="left:118px;top:281px;font-size:10.7px">Bodies</div>
<div class="row" style="left:78px;top:300px;width:103px"></div>
<svg class="a" style="left:81px;top:305px" width="16" height="11" viewBox="0 0 16 11"><path d="M0.5,5.5 Q8,-3 15.5,5.5 Q8,14 0.5,5.5Z" fill="#9a9a9a"/><circle cx="8" cy="5.5" r="2.6" fill="#f0f0f0"/><circle cx="8" cy="5.5" r="1.5" fill="#9a9a9a"/></svg>
<svg class="a" style="left:106px;top:302px" width="16" height="16" viewBox="0 0 16 16"><defs><linearGradient id="bg10" x1="0" y1="0" x2="1" y2="0"><stop offset="0" stop-color="#b9bec8"/><stop offset=".5" stop-color="#dde0e6"/><stop offset="1" stop-color="#fff"/></linearGradient></defs><path d="M4,0.8 H12 Q15.2,0.8 15.2,4 V12 Q15.2,15.2 12,15.2 H4 Q0.8,15.2 0.8,12 V4 Q0.8,0.8 4,0.8Z" fill="#fff" stroke="#353b45" stroke-width="1.2"/><rect x="4" y="5" width="8" height="9.5" fill="url(#bg10)"/><rect x="2" y="4" width="1.5" height="10" fill="#e3e6ea"/></svg>
<div class="tx" style="left:136px;top:306px;font-size:10.4px">Body11</div>
<div class="row" style="left:78px;top:324px;width:107px"></div>
<svg class="a" style="left:81px;top:329px" width="16" height="11" viewBox="0 0 16 11"><path d="M0.5,5.5 Q8,-3 15.5,5.5 Q8,14 0.5,5.5Z" fill="#9a9a9a"/><circle cx="8" cy="5.5" r="2.6" fill="#f0f0f0"/><circle cx="8" cy="5.5" r="1.5" fill="#9a9a9a"/></svg>
<svg class="a" style="left:106px;top:326px" width="16" height="16" viewBox="0 0 16 16"><defs><linearGradient id="bg11" x1="0" y1="0" x2="1" y2="0"><stop offset="0" stop-color="#b9bec8"/><stop offset=".5" stop-color="#dde0e6"/><stop offset="1" stop-color="#fff"/></linearGradient></defs><path d="M4,0.8 H12 Q15.2,0.8 15.2,4 V12 Q15.2,15.2 12,15.2 H4 Q0.8,15.2 0.8,12 V4 Q0.8,0.8 4,0.8Z" fill="#fff" stroke="#353b45" stroke-width="1.2"/><rect x="4" y="5" width="8" height="9.5" fill="url(#bg11)"/><rect x="2" y="4" width="1.5" height="10" fill="#e3e6ea"/></svg>
<div class="tx" style="left:136px;top:330px;font-size:10.4px">Body12</div>
<div class="row" style="left:78px;top:348px;width:107px"></div>
<svg class="a" style="left:81px;top:353px" width="16" height="11" viewBox="0 0 16 11"><path d="M0.5,5.5 Q8,-3 15.5,5.5 Q8,14 0.5,5.5Z" fill="#9a9a9a"/><circle cx="8" cy="5.5" r="2.6" fill="#f0f0f0"/><circle cx="8" cy="5.5" r="1.5" fill="#9a9a9a"/></svg>
<svg class="a" style="left:106px;top:350px" width="16" height="16" viewBox="0 0 16 16"><defs><linearGradient id="bg12" x1="0" y1="0" x2="1" y2="0"><stop offset="0" stop-color="#b9bec8"/><stop offset=".5" stop-color="#dde0e6"/><stop offset="1" stop-color="#fff"/></linearGradient></defs><path d="M4,0.8 H12 Q15.2,0.8 15.2,4 V12 Q15.2,15.2 12,15.2 H4 Q0.8,15.2 0.8,12 V4 Q0.8,0.8 4,0.8Z" fill="#fff" stroke="#353b45" stroke-width="1.2"/><rect x="4" y="5" width="8" height="9.5" fill="url(#bg12)"/><rect x="2" y="4" width="1.5" height="10" fill="#e3e6ea"/></svg>
<div class="tx" style="left:136px;top:354px;font-size:10.4px">Body13</div>
<div class="row" style="left:78px;top:372px;width:107px"></div>
<svg class="a" style="left:81px;top:377px" width="16" height="11" viewBox="0 0 16 11"><path d="M0.5,5.5 Q8,-3 15.5,5.5 Q8,14 0.5,5.5Z" fill="#9a9a9a"/><circle cx="8" cy="5.5" r="2.6" fill="#f0f0f0"/><circle cx="8" cy="5.5" r="1.5" fill="#9a9a9a"/></svg>
<svg class="a" style="left:106px;top:374px" width="16" height="16" viewBox="0 0 16 16"><defs><linearGradient id="bg13" x1="0" y1="0" x2="1" y2="0"><stop offset="0" stop-color="#b9bec8"/><stop offset=".5" stop-color="#dde0e6"/><stop offset="1" stop-color="#fff"/></linearGradient></defs><path d="M4,0.8 H12 Q15.2,0.8 15.2,4 V12 Q15.2,15.2 12,15.2 H4 Q0.8,15.2 0.8,12 V4 Q0.8,0.8 4,0.8Z" fill="#fff" stroke="#353b45" stroke-width="1.2"/><rect x="4" y="5" width="8" height="9.5" fill="url(#bg13)"/><rect x="2" y="4" width="1.5" height="10" fill="#e3e6ea"/></svg>
<div class="tx" style="left:136px;top:378px;font-size:10.4px">Body14</div>
<div class="row" style="left:78px;top:396px;width:99px"></div>
<svg class="a" style="left:81px;top:401px" width="16" height="11" viewBox="0 0 16 11"><path d="M0.5,5.5 Q8,-3 15.5,5.5 Q8,14 0.5,5.5Z" fill="#9a9a9a"/><circle cx="8" cy="5.5" r="2.6" fill="#f0f0f0"/><circle cx="8" cy="5.5" r="1.5" fill="#9a9a9a"/></svg>
<svg class="a" style="left:106px;top:398px" width="16" height="16" viewBox="0 0 16 16"><defs><linearGradient id="bg14" x1="0" y1="0" x2="1" y2="0"><stop offset="0" stop-color="#b9bec8"/><stop offset=".5" stop-color="#dde0e6"/><stop offset="1" stop-color="#fff"/></linearGradient></defs><path d="M4,0.8 H12 Q15.2,0.8 15.2,4 V12 Q15.2,15.2 12,15.2 H4 Q0.8,15.2 0.8,12 V4 Q0.8,0.8 4,0.8Z" fill="#fff" stroke="#353b45" stroke-width="1.2"/><rect x="4" y="5" width="8" height="9.5" fill="url(#bg14)"/><rect x="2" y="4" width="1.5" height="10" fill="#e3e6ea"/></svg>
<div class="tx" style="left:136px;top:402px;font-size:10.4px">Body3</div>
<div class="row" style="left:78px;top:420px;width:99px"></div>
<svg class="a" style="left:81px;top:425px" width="16" height="11" viewBox="0 0 16 11"><path d="M0.5,5.5 Q8,-3 15.5,5.5 Q8,14 0.5,5.5Z" fill="#9a9a9a"/><circle cx="8" cy="5.5" r="2.6" fill="#f0f0f0"/><circle cx="8" cy="5.5" r="1.5" fill="#9a9a9a"/></svg>
<svg class="a" style="left:106px;top:422px" width="16" height="16" viewBox="0 0 16 16"><defs><linearGradient id="bg15" x1="0" y1="0" x2="1" y2="0"><stop offset="0" stop-color="#b9bec8"/><stop offset=".5" stop-color="#dde0e6"/><stop offset="1" stop-color="#fff"/></linearGradient></defs><path d="M4,0.8 H12 Q15.2,0.8 15.2,4 V12 Q15.2,15.2 12,15.2 H4 Q0.8,15.2 0.8,12 V4 Q0.8,0.8 4,0.8Z" fill="#fff" stroke="#353b45" stroke-width="1.2"/><rect x="4" y="5" width="8" height="9.5" fill="url(#bg15)"/><rect x="2" y="4" width="1.5" height="10" fill="#e3e6ea"/></svg>
<div class="tx" style="left:136px;top:426px;font-size:10.4px">Body4</div>
<div class="row" style="left:78px;top:444px;width:99px"></div>
<svg class="a" style="left:81px;top:449px" width="16" height="11" viewBox="0 0 16 11"><path d="M0.5,5.5 Q8,-3 15.5,5.5 Q8,14 0.5,5.5Z" fill="#9a9a9a"/><circle cx="8" cy="5.5" r="2.6" fill="#f0f0f0"/><circle cx="8" cy="5.5" r="1.5" fill="#9a9a9a"/></svg>
<svg class="a" style="left:106px;top:446px" width="16" height="16" viewBox="0 0 16 16"><defs><linearGradient id="bg16" x1="0" y1="0" x2="1" y2="0"><stop offset="0" stop-color="#b9bec8"/><stop offset=".5" stop-color="#dde0e6"/><stop offset="1" stop-color="#fff"/></linearGradient></defs><path d="M4,0.8 H12 Q15.2,0.8 15.2,4 V12 Q15.2,15.2 12,15.2 H4 Q0.8,15.2 0.8,12 V4 Q0.8,0.8 4,0.8Z" fill="#fff" stroke="#353b45" stroke-width="1.2"/><rect x="4" y="5" width="8" height="9.5" fill="url(#bg16)"/><rect x="2" y="4" width="1.5" height="10" fill="#e3e6ea"/></svg>
<div class="tx" style="left:136px;top:450px;font-size:10.4px">Body5</div>
<div class="row" style="left:78px;top:468px;width:99px"></div>
<svg class="a" style="left:81px;top:473px" width="16" height="11" viewBox="0 0 16 11"><path d="M0.5,5.5 Q8,-3 15.5,5.5 Q8,14 0.5,5.5Z" fill="#9a9a9a"/><circle cx="8" cy="5.5" r="2.6" fill="#f0f0f0"/><circle cx="8" cy="5.5" r="1.5" fill="#9a9a9a"/></svg>
<svg class="a" style="left:106px;top:470px" width="16" height="16" viewBox="0 0 16 16"><defs><linearGradient id="bg17" x1="0" y1="0" x2="1" y2="0"><stop offset="0" stop-color="#b9bec8"/><stop offset=".5" stop-color="#dde0e6"/><stop offset="1" stop-color="#fff"/></linearGradient></defs><path d="M4,0.8 H12 Q15.2,0.8 15.2,4 V12 Q15.2,15.2 12,15.2 H4 Q0.8,15.2 0.8,12 V4 Q0.8,0.8 4,0.8Z" fill="#fff" stroke="#353b45" stroke-width="1.2"/><rect x="4" y="5" width="8" height="9.5" fill="url(#bg17)"/><rect x="2" y="4" width="1.5" height="10" fill="#e3e6ea"/></svg>
<div class="tx" style="left:136px;top:474px;font-size:10.4px">Body6</div>
<div class="row" style="left:78px;top:492px;width:99px"></div>
<svg class="a" style="left:81px;top:497px" width="16" height="11" viewBox="0 0 16 11"><path d="M0.5,5.5 Q8,-3 15.5,5.5 Q8,14 0.5,5.5Z" fill="#9a9a9a"/><circle cx="8" cy="5.5" r="2.6" fill="#f0f0f0"/><circle cx="8" cy="5.5" r="1.5" fill="#9a9a9a"/></svg>
<svg class="a" style="left:106px;top:494px" width="16" height="16" viewBox="0 0 16 16"><defs><linearGradient id="bg18" x1="0" y1="0" x2="1" y2="0"><stop offset="0" stop-color="#b9bec8"/><stop offset=".5" stop-color="#dde0e6"/><stop offset="1" stop-color="#fff"/></linearGradient></defs><path d="M4,0.8 H12 Q15.2,0.8 15.2,4 V12 Q15.2,15.2 12,15.2 H4 Q0.8,15.2 0.8,12 V4 Q0.8,0.8 4,0.8Z" fill="#fff" stroke="#353b45" stroke-width="1.2"/><rect x="4" y="5" width="8" height="9.5" fill="url(#bg18)"/><rect x="2" y="4" width="1.5" height="10" fill="#e3e6ea"/></svg>
<div class="tx" style="left:136px;top:498px;font-size:10.4px">Body7</div>
<div class="row" style="left:78px;top:516px;width:99px"></div>
<svg class="a" style="left:81px;top:521px" width="16" height="11" viewBox="0 0 16 11"><path d="M0.5,5.5 Q8,-3 15.5,5.5 Q8,14 0.5,5.5Z" fill="#9a9a9a"/><circle cx="8" cy="5.5" r="2.6" fill="#f0f0f0"/><circle cx="8" cy="5.5" r="1.5" fill="#9a9a9a"/></svg>
<svg class="a" style="left:106px;top:518px" width="16" height="16" viewBox="0 0 16 16"><defs><linearGradient id="bg19" x1="0" y1="0" x2="1" y2="0"><stop offset="0" stop-color="#b9bec8"/><stop offset=".5" stop-color="#dde0e6"/><stop offset="1" stop-color="#fff"/></linearGradient></defs><path d="M4,0.8 H12 Q15.2,0.8 15.2,4 V12 Q15.2,15.2 12,15.2 H4 Q0.8,15.2 0.8,12 V4 Q0.8,0.8 4,0.8Z" fill="#fff" stroke="#353b45" stroke-width="1.2"/><rect x="4" y="5" width="8" height="9.5" fill="url(#bg19)"/><rect x="2" y="4" width="1.5" height="10" fill="#e3e6ea"/></svg>
<div class="tx" style="left:136px;top:522px;font-size:10.4px">Body8</div>
<div class="row" style="left:78px;top:540px;width:99px"></div>
<svg class="a" style="left:81px;top:545px" width="16" height="11" viewBox="0 0 16 11"><path d="M0.5,5.5 Q8,-3 15.5,5.5 Q8,14 0.5,5.5Z" fill="#9a9a9a"/><circle cx="8" cy="5.5" r="2.6" fill="#f0f0f0"/><circle cx="8" cy="5.5" r="1.5" fill="#9a9a9a"/></svg>
<svg class="a" style="left:106px;top:542px" width="16" height="16" viewBox="0 0 16 16"><defs><linearGradient id="bg20" x1="0" y1="0" x2="1" y2="0"><stop offset="0" stop-color="#b9bec8"/><stop offset=".5" stop-color="#dde0e6"/><stop offset="1" stop-color="#fff"/></linearGradient></defs><path d="M4,0.8 H12 Q15.2,0.8 15.2,4 V12 Q15.2,15.2 12,15.2 H4 Q0.8,15.2 0.8,12 V4 Q0.8,0.8 4,0.8Z" fill="#fff" stroke="#353b45" stroke-width="1.2"/><rect x="4" y="5" width="8" height="9.5" fill="url(#bg20)"/><rect x="2" y="4" width="1.5" height="10" fill="#e3e6ea"/></svg>
<div class="tx" style="left:136px;top:546px;font-size:10.4px">Body9</div>
<div class="row" style="left:78px;top:564px;width:107px"></div>
<svg class="a" style="left:81px;top:569px" width="16" height="11" viewBox="0 0 16 11"><path d="M0.5,5.5 Q8,-3 15.5,5.5 Q8,14 0.5,5.5Z" fill="#9a9a9a"/><circle cx="8" cy="5.5" r="2.6" fill="#f0f0f0"/><circle cx="8" cy="5.5" r="1.5" fill="#9a9a9a"/></svg>
<svg class="a" style="left:106px;top:566px" width="16" height="16" viewBox="0 0 16 16"><defs><linearGradient id="bg21" x1="0" y1="0" x2="1" y2="0"><stop offset="0" stop-color="#b9bec8"/><stop offset=".5" stop-color="#dde0e6"/><stop offset="1" stop-color="#fff"/></linearGradient></defs><path d="M4,0.8 H12 Q15.2,0.8 15.2,4 V12 Q15.2,15.2 12,15.2 H4 Q0.8,15.2 0.8,12 V4 Q0.8,0.8 4,0.8Z" fill="#fff" stroke="#353b45" stroke-width="1.2"/><rect x="4" y="5" width="8" height="9.5" fill="url(#bg21)"/><rect x="2" y="4" width="1.5" height="10" fill="#e3e6ea"/></svg>
<div class="tx" style="left:136px;top:570px;font-size:10.4px">Body10</div>
<div class="row" style="left:78px;top:588px;width:99px"></div>
<svg class="a" style="left:81px;top:593px" width="16" height="11" viewBox="0 0 16 11"><path d="M0.5,5.5 Q8,-3 15.5,5.5 Q8,14 0.5,5.5Z" fill="#9a9a9a"/><circle cx="8" cy="5.5" r="2.6" fill="#f0f0f0"/><circle cx="8" cy="5.5" r="1.5" fill="#9a9a9a"/></svg>
<svg class="a" style="left:106px;top:590px" width="16" height="16" viewBox="0 0 16 16"><defs><linearGradient id="bg22" x1="0" y1="0" x2="1" y2="0"><stop offset="0" stop-color="#b9bec8"/><stop offset=".5" stop-color="#dde0e6"/><stop offset="1" stop-color="#fff"/></linearGradient></defs><path d="M4,0.8 H12 Q15.2,0.8 15.2,4 V12 Q15.2,15.2 12,15.2 H4 Q0.8,15.2 0.8,12 V4 Q0.8,0.8 4,0.8Z" fill="#fff" stroke="#353b45" stroke-width="1.2"/><rect x="4" y="5" width="8" height="9.5" fill="url(#bg22)"/><rect x="2" y="4" width="1.5" height="10" fill="#e3e6ea"/></svg>
<div class="tx" style="left:136px;top:594px;font-size:10.4px">Body2</div>
<div class="row" style="left:78px;top:612px;width:107px"></div>
<svg class="a" style="left:81px;top:617px" width="16" height="11" viewBox="0 0 16 11"><path d="M0.5,5.5 Q8,-3 15.5,5.5 Q8,14 0.5,5.5Z" fill="#9a9a9a"/><circle cx="8" cy="5.5" r="2.6" fill="#f0f0f0"/><circle cx="8" cy="5.5" r="1.5" fill="#9a9a9a"/></svg>
<svg class="a" style="left:106px;top:614px" width="16" height="16" viewBox="0 0 16 16"><defs><linearGradient id="bg23" x1="0" y1="0" x2="1" y2="0"><stop offset="0" stop-color="#b9bec8"/><stop offset=".5" stop-color="#dde0e6"/><stop offset="1" stop-color="#fff"/></linearGradient></defs><path d="M4,0.8 H12 Q15.2,0.8 15.2,4 V12 Q15.2,15.2 12,15.2 H4 Q0.8,15.2 0.8,12 V4 Q0.8,0.8 4,0.8Z" fill="#fff" stroke="#353b45" stroke-width="1.2"/><rect x="4" y="5" width="8" height="9.5" fill="url(#bg23)"/><rect x="2" y="4" width="1.5" height="10" fill="#e3e6ea"/></svg>
<div class="tx" style="left:136px;top:618px;font-size:10.4px">Body26</div>
<div class="row" style="left:78px;top:636px;width:107px"></div>
<svg class="a" style="left:81px;top:641px" width="16" height="11" viewBox="0 0 16 11"><path d="M0.5,5.5 Q8,-3 15.5,5.5 Q8,14 0.5,5.5Z" fill="#9a9a9a"/><circle cx="8" cy="5.5" r="2.6" fill="#f0f0f0"/><circle cx="8" cy="5.5" r="1.5" fill="#9a9a9a"/></svg>
<svg class="a" style="left:106px;top:638px" width="16" height="16" viewBox="0 0 16 16"><defs><linearGradient id="bg24" x1="0" y1="0" x2="1" y2="0"><stop offset="0" stop-color="#b9bec8"/><stop offset=".5" stop-color="#dde0e6"/><stop offset="1" stop-color="#fff"/></linearGradient></defs><path d="M4,0.8 H12 Q15.2,0.8 15.2,4 V12 Q15.2,15.2 12,15.2 H4 Q0.8,15.2 0.8,12 V4 Q0.8,0.8 4,0.8Z" fill="#fff" stroke="#353b45" stroke-width="1.2"/><rect x="4" y="5" width="8" height="9.5" fill="url(#bg24)"/><rect x="2" y="4" width="1.5" height="10" fill="#e3e6ea"/></svg>
<div class="tx" style="left:136px;top:642px;font-size:10.4px">Body27</div>
<div class="row" style="left:78px;top:660px;width:107px"></div>
<svg class="a" style="left:81px;top:665px" width="16" height="11" viewBox="0 0 16 11"><path d="M0.5,5.5 Q8,-3 15.5,5.5 Q8,14 0.5,5.5Z" fill="#9a9a9a"/><circle cx="8" cy="5.5" r="2.6" fill="#f0f0f0"/><circle cx="8" cy="5.5" r="1.5" fill="#9a9a9a"/></svg>
<svg class="a" style="left:106px;top:662px" width="16" height="16" viewBox="0 0 16 16"><defs><linearGradient id="bg25" x1="0" y1="0" x2="1" y2="0"><stop offset="0" stop-color="#b9bec8"/><stop offset=".5" stop-color="#dde0e6"/><stop offset="1" stop-color="#fff"/></linearGradient></defs><path d="M4,0.8 H12 Q15.2,0.8 15.2,4 V12 Q15.2,15.2 12,15.2 H4 Q0.8,15.2 0.8,12 V4 Q0.8,0.8 4,0.8Z" fill="#fff" stroke="#353b45" stroke-width="1.2"/><rect x="4" y="5" width="8" height="9.5" fill="url(#bg25)"/><rect x="2" y="4" width="1.5" height="10" fill="#e3e6ea"/></svg>
<div class="tx" style="left:136px;top:666px;font-size:10.4px">Body28</div>
<div class="row" style="left:78px;top:684px;width:107px"></div>
<svg class="a" style="left:81px;top:689px" width="16" height="11" viewBox="0 0 16 11"><path d="M0.5,5.5 Q8,-3 15.5,5.5 Q8,14 0.5,5.5Z" fill="#9a9a9a"/><circle cx="8" cy="5.5" r="2.6" fill="#f0f0f0"/><circle cx="8" cy="5.5" r="1.5" fill="#9a9a9a"/></svg>
<svg class="a" style="left:106px;top:686px" width="16" height="16" viewBox="0 0 16 16"><defs><linearGradient id="bg26" x1="0" y1="0" x2="1" y2="0"><stop offset="0" stop-color="#b9bec8"/><stop offset=".5" stop-color="#dde0e6"/><stop offset="1" stop-color="#fff"/></linearGradient></defs><path d="M4,0.8 H12 Q15.2,0.8 15.2,4 V12 Q15.2,15.2 12,15.2 H4 Q0.8,15.2 0.8,12 V4 Q0.8,0.8 4,0.8Z" fill="#fff" stroke="#353b45" stroke-width="1.2"/><rect x="4" y="5" width="8" height="9.5" fill="url(#bg26)"/><rect x="2" y="4" width="1.5" height="10" fill="#e3e6ea"/></svg>
<div class="tx" style="left:136px;top:690px;font-size:10.4px">Body29</div>
<div class="row" style="left:78px;top:708px;width:107px"></div>
<svg class="a" style="left:81px;top:713px" width="16" height="11" viewBox="0 0 16 11"><path d="M0.5,5.5 Q8,-3 15.5,5.5 Q8,14 0.5,5.5Z" fill="#9a9a9a"/><circle cx="8" cy="5.5" r="2.6" fill="#f0f0f0"/><circle cx="8" cy="5.5" r="1.5" fill="#9a9a9a"/></svg>
<svg class="a" style="left:106px;top:710px" width="16" height="16" viewBox="0 0 16 16"><defs><linearGradient id="bg27" x1="0" y1="0" x2="1" y2="0"><stop offset="0" stop-color="#b9bec8"/><stop offset=".5" stop-color="#dde0e6"/><stop offset="1" stop-color="#fff"/></linearGradient></defs><path d="M4,0.8 H12 Q15.2,0.8 15.2,4 V12 Q15.2,15.2 12,15.2 H4 Q0.8,15.2 0.8,12 V4 Q0.8,0.8 4,0.8Z" fill="#fff" stroke="#353b45" stroke-width="1.2"/><rect x="4" y="5" width="8" height="9.5" fill="url(#bg27)"/><rect x="2" y="4" width="1.5" height="10" fill="#e3e6ea"/></svg>
<div class="tx" style="left:136px;top:714px;font-size:10.4px">Body30</div>
<svg class="a" style="left:41px;top:735px" width="11" height="14" viewBox="0 0 11 14"><path d="M1,1 L10,7 L1,13Z" fill="#fff" stroke="#222" stroke-width="1.3" stroke-linejoin="round"/></svg>
<div class="row" style="left:60px;top:732px;width:115px"></div>
<svg class="a" style="left:63px;top:736px" width="16" height="12" viewBox="0 0 16 12"><path d="M0.5,6 Q8,-2.5 15.5,6 Q8,14.5 0.5,6Z" fill="#e2e2e2"/><circle cx="8" cy="6" r="2.4" fill="#f0f0f0"/><path d="M2,0.5 L14,11.5" stroke="#f0f0f0" stroke-width="2"/><path d="M2.5,0 L14.5,11" stroke="#dadada" stroke-width="1"/></svg>
<svg class="a" style="left:88px;top:735px" width="16" height="13" viewBox="0 0 16 13"><path d="M0,0.4 H7 L7.8,1.4 L7,2.4 H0Z" fill="#999"/><path d="M0,3.6 H7.6 L9.4,1.4 H16 V13 H0Z" fill="#999"/></svg>
<div class="tx" style="left:118px;top:737px;">Sketches</div>
<svg class="a" style="left:41px;top:759px" width="11" height="14" viewBox="0 0 11 14"><path d="M1,1 L10,7 L1,13Z" fill="#fff" stroke="#222" stroke-width="1.3" stroke-linejoin="round"/></svg>
<div class="row" style="left:60px;top:756px;width:131px"></div>
<svg class="a" style="left:63px;top:760px" width="16" height="12" viewBox="0 0 16 12"><path d="M0.5,6 Q8,-2.5 15.5,6 Q8,14.5 0.5,6Z" fill="#e2e2e2"/><circle cx="8" cy="6" r="2.4" fill="#f0f0f0"/><path d="M2,0.5 L14,11.5" stroke="#f0f0f0" stroke-width="2"/><path d="M2.5,0 L14.5,11" stroke="#dadada" stroke-width="1"/></svg>
<svg class="a" style="left:88px;top:759px" width="16" height="13" viewBox="0 0 16 13"><path d="M0,0.4 H7 L7.8,1.4 L7,2.4 H0Z" fill="#999"/><path d="M0,3.6 H7.6 L9.4,1.4 H16 V13 H0Z" fill="#999"/></svg>
<div class="tx" style="left:118px;top:761px;">Construction</div>
<div class="a" style="left:6px;top:969px;width:300px;height:25px;border:1px solid #cfcfcf;background:#f1f1f1"></div>
<div class="rl" style="left:31px;top:976px;color:#555;transform:scaleX(.88)">COMMENTS</div>
<svg class="a" style="left:285px;top:977px" width="10" height="10" viewBox="0 0 10 10"><circle cx="5" cy="5" r="4.8" fill="#222"/><path d="M2,5 H8 M5,2 V8" stroke="#fff" stroke-width="1.5"/></svg>
<div class="a" style="left:301px;top:977px;width:1px;height:9px;background:#555"></div><div class="a" style="left:303px;top:979px;width:1px;height:6px;background:#aaa"></div><div class="a" style="left:833px;top:970px;width:252px;height:24px;background:#f1f1f1"></div>
<svg class="a" style="left:833px;top:970px" width="252" height="24" viewBox="0 0 252 24">
 <!-- orbit -->
 <g transform="translate(0,0)" fill="none" stroke="#3a3f45" stroke-width="1.1">
  <path d="M13.5,5 Q10,3.5 9.5,10 Q9,17 10.5,19.5 Q12,21.5 13.5,19.5"/>
  <path d="M6,8.5 Q3.5,11 5.5,13.5"/>
  <path d="M10.5,16.5 H14 Q20.5,16 21,12.5 Q21,9.5 17.5,8"/>
  <path d="M13.5,5.5 L15.5,7.5 M18,8 L19,10.2" stroke-width="1.3"/>
 </g>
 <path d="M11.5,11.8 H15 M13.25,10 V13.6" stroke="#1a7ef0" stroke-width="1.4"/>
 <path d="M24,9 H30 L27,13Z" fill="#333"/>
 <!-- look at -->
 <g transform="translate(35,4)">
  <path d="M3,6 L6,1.5 L8,5 L12.5,2.5 V6Z" fill="#a9adb3" stroke="#4a4f55" stroke-width=".8"/>
  <rect x="0.8" y="6" width="15" height="9.8" rx=".8" fill="#f4f4f6" stroke="#3a3f45" stroke-width="1.1"/>
  <rect x="3.2" y="8.6" width="10.2" height="4.4" fill="#a8acb6" stroke="#3a3f45" stroke-width=".9"/>
 </g>
 <!-- pan -->
 <g transform="translate(62,4)">
  <path d="M4,15 Q1,10 1,8 Q1,7 2.5,7.5 L4,10 V3 Q4,1.5 5,1.5 Q6,1.5 6,3 V7 V1.5 Q6,0.5 7.5,0.5 Q9,0.5 9,1.5 V7 V2 Q9,1 10.3,1 Q11.5,1 11.5,2 V7.5 V4 Q11.5,3 12.5,3 Q14,3 14,4 V11 Q14,15 10,15.5 H6Z" fill="#eee" stroke="#444" stroke-width="1"/>
 </g>
 <!-- zoom -->
 <g transform="translate(87,4)">
  <circle cx="6" cy="9" r="5" fill="#e6f0f6" stroke="#555" stroke-width="1.2"/>
  <path d="M9.5,12.5 L13.5,16" stroke="#333" stroke-width="2.2"/>
  <path d="M13,0 V5 M10.5,2.5 H15.5 M10.5,7 H15.5" stroke="#333" stroke-width="1"/>
 </g>
 <!-- fit -->
 <g transform="translate(113,4)">
  <rect x="0.5" y="0.5" width="15" height="15" fill="none" stroke="#555" stroke-width=".8" stroke-dasharray="1.5,1.5"/>
  <circle cx="7" cy="7" r="5.5" fill="#e6f0f6" stroke="#555" stroke-width="1.2"/>
  <path d="M11,11 L15,15.5" stroke="#333" stroke-width="2.2"/>
 </g>
 <path d="M135,9 H141 L138,13Z" fill="#333"/>
 <!-- display -->
 <g transform="translate(155,4)">
  <rect x="0.5" y="0.5" width="15.5" height="12" rx="1" fill="#4a4a4a"/>
  <rect x="2.5" y="2.5" width="11.5" height="8" fill="#7fa8e0"/>
  <path d="M5,13 H11 L12,15.5 H4Z" fill="#ddd" stroke="#555" stroke-width=".6"/>
 </g>
 <path d="M174,9 H180 L177,13Z" fill="#333"/>
 <!-- grid -->
 <g transform="translate(186,4)">
  <rect x="0.5" y="0.5" width="15" height="15" fill="#bbb" stroke="#555" stroke-width="1"/>
  <path d="M3.5,0 V16 M6.5,0 V16 M9.5,0 V16 M12.5,0 V16 M0,3.5 H16 M0,6.5 H16 M0,9.5 H16 M0,12.5 H16" stroke="#666" stroke-width=".9"/>
 </g>
 <path d="M205,9 H211 L208,13Z" fill="#333"/>
 <!-- viewports -->
 <g transform="translate(217,4)">
  <rect x="0.5" y="0.5" width="15" height="15" fill="#3b5fa8"/>
  <rect x="2" y="2" width="5" height="5" fill="#a8c4ea"/><rect x="9" y="2" width="5" height="5" fill="#a8c4ea"/>
  <rect x="2" y="9" width="5" height="5" fill="#a8c4ea"/><rect x="9" y="9" width="5" height="5" fill="#a8c4ea"/>
 </g>
 <path d="M236,9 H242 L239,13Z" fill="#333"/>
</svg>
<svg class="a" style="left:1790px;top:150px" width="120" height="120" viewBox="1790 150 120 120">
 <defs>
  <filter id="cshadow" x="-50%" y="-50%" width="200%" height="200%"><feGaussianBlur stdDeviation="4"/></filter>
  <linearGradient id="cubeL" x1="0" y1="0" x2="0" y2="1"><stop offset="0" stop-color="#f2f2f2"/><stop offset="1" stop-color="#d9d9d9"/></linearGradient>
  <linearGradient id="cubeR" x1="0" y1="0" x2="0" y2="1"><stop offset="0" stop-color="#ececec"/><stop offset="1" stop-color="#d2d2d2"/></linearGradient>
 </defs>
 <polygon points="1823,232 1854,252 1886,232 1870,258 1840,258" fill="#aaa" opacity=".35" filter="url(#cshadow)"/>
 <polygon points="1854.4,173.9 1889.4,189.4 1854.4,208.3 1819.4,189.4" fill="#efefef"/>
 <polygon points="1819.4,189.4 1854.4,208.3 1854.4,250 1823.3,227.8" fill="url(#cubeL)"/>
 <polygon points="1854.4,208.3 1889.4,189.4 1885.6,227.8 1854.4,250" fill="url(#cubeR)"/>
 <g fill="none" stroke="#6a6a6a" stroke-width=".7">
  <polygon points="1854.4,173.9 1889.4,189.4 1885.6,227.8 1854.4,250 1823.3,227.8 1819.4,189.4"/>
  <polyline points="1819.4,189.4 1854.4,208.3 1889.4,189.4"/>
  <line x1="1854.4" y1="208.3" x2="1854.4" y2="250"/>
 </g>
 <g font-family="Liberation Sans" font-size="8" fill="#8c8c8c">
  <text transform="matrix(0.86,0.44,-0.3,0.62,1846.5,189)" font-size="9">TOP</text>
  <text transform="matrix(0.86,0.47,0,1.0,1825.5,215)" font-size="8.2">FRONT</text>
  <text transform="matrix(0.86,-0.47,0,1.0,1861.5,231.5)" font-size="8.2">RIGHT</text>
 </g>
 <line x1="1854.4" y1="173.5" x2="1854.4" y2="166" stroke="#6ee86e" stroke-width="1.6"/>
 <text transform="translate(1850.6,165) scale(.82,1)" font-family="Liberation Sans" font-size="13.5" fill="#78ee78">Y</text>
 <line x1="1823" y1="228" x2="1816" y2="231.5" stroke="#6f6fff" stroke-width="1.6"/>
 <text transform="translate(1807.5,239.5) scale(.85,1)" font-family="Liberation Sans" font-size="13.5" fill="#6f6fff">Z</text>
 <line x1="1886" y1="228" x2="1893" y2="231.5" stroke="#f08080" stroke-width="1.6"/>
 <text transform="translate(1893.5,239.5) scale(.85,1)" font-family="Liberation Sans" font-size="13.5" fill="#f08080">X</text>
</svg>
<svg class="a" style="left:0;top:1000px" width="140" height="47" viewBox="0 1000 140 47">
<g fill="#333">
 <rect x="13" y="1017" width="2" height="13.5"/><path d="M25,1017 V1030.5 L15.5,1023.75Z"/>
 <path d="M46,1017 V1030.5 L37,1023.75Z"/><rect x="47.5" y="1020.5" width="2.5" height="6.5"/>
 <path d="M62.5,1017 L74.5,1023.75 L62.5,1030.5Z"/>
 <rect x="87" y="1020.5" width="2.5" height="6.5"/><path d="M91,1017 L100,1023.75 L91,1030.5Z"/>
 <path d="M113,1017 L122.5,1023.75 L113,1030.5Z"/><rect x="123" y="1017" width="2" height="13.5"/>
</g></svg>
<svg class="a" style="left:0;top:1000px" width="1920" height="47" viewBox="0 1000 1920 47">
<g transform="translate(148,1015)"><g opacity="1"><path d="M3,1.4 H12 M1.5,3 V12.2 M13.6,3 V7.2 M3,13.4 H7.5 L9,14.2" stroke="#555" stroke-width="1" fill="none"/><rect x="0" y="0" width="2.7" height="2.7" fill="#1b84e6"/><rect x="12.2" y="0" width="2.7" height="2.7" fill="#1b84e6"/><rect x="0" y="12" width="2.7" height="2.7" fill="#1b84e6"/><path d="M9.2,14 L14.3,8.6 L16.2,10.4 L11,15.8Z" fill="#fbbd3f"/><path d="M14.3,8.6 L15.3,7.6 Q16.2,7.3 16.9,8.2 Q17.5,9 17.2,9.4 L16.2,10.4Z" fill="#f5262c"/><path d="M9.2,14 L11,15.8 L8.3,16.4Z" fill="#555"/></g></g>
<g transform="translate(172,1015)"><g opacity="1"><path d="M3,1.4 H12 M1.5,3 V12.2 M13.6,3 V7.2 M3,13.4 H7.5 L9,14.2" stroke="#555" stroke-width="1" fill="none"/><rect x="0" y="0" width="2.7" height="2.7" fill="#1b84e6"/><rect x="12.2" y="0" width="2.7" height="2.7" fill="#1b84e6"/><rect x="0" y="12" width="2.7" height="2.7" fill="#1b84e6"/><path d="M9.2,14 L14.3,8.6 L16.2,10.4 L11,15.8Z" fill="#fbbd3f"/><path d="M14.3,8.6 L15.3,7.6 Q16.2,7.3 16.9,8.2 Q17.5,9 17.2,9.4 L16.2,10.4Z" fill="#f5262c"/><path d="M9.2,14 L11,15.8 L8.3,16.4Z" fill="#555"/></g></g>
<g transform="translate(196,1015)"><g opacity="1"><path d="M3,1.4 H12 M1.5,3 V12.2 M13.6,3 V7.2 M3,13.4 H7.5 L9,14.2" stroke="#555" stroke-width="1" fill="none"/><rect x="0" y="0" width="2.7" height="2.7" fill="#1b84e6"/><rect x="12.2" y="0" width="2.7" height="2.7" fill="#1b84e6"/><rect x="0" y="12" width="2.7" height="2.7" fill="#1b84e6"/><path d="M9.2,14 L14.3,8.6 L16.2,10.4 L11,15.8Z" fill="#fbbd3f"/><path d="M14.3,8.6 L15.3,7.6 Q16.2,7.3 16.9,8.2 Q17.5,9 17.2,9.4 L16.2,10.4Z" fill="#f5262c"/><path d="M9.2,14 L11,15.8 L8.3,16.4Z" fill="#555"/></g></g>
<g transform="translate(220,1015)"><g opacity="1"><path d="M3,1.4 H12 M1.5,3 V12.2 M13.6,3 V7.2 M3,13.4 H7.5 L9,14.2" stroke="#555" stroke-width="1" fill="none"/><rect x="0" y="0" width="2.7" height="2.7" fill="#1b84e6"/><rect x="12.2" y="0" width="2.7" height="2.7" fill="#1b84e6"/><rect x="0" y="12" width="2.7" height="2.7" fill="#1b84e6"/><path d="M9.2,14 L14.3,8.6 L16.2,10.4 L11,15.8Z" fill="#fbbd3f"/><path d="M14.3,8.6 L15.3,7.6 Q16.2,7.3 16.9,8.2 Q17.5,9 17.2,9.4 L16.2,10.4Z" fill="#f5262c"/><path d="M9.2,14 L11,15.8 L8.3,16.4Z" fill="#555"/></g></g>
<g transform="translate(244,1015)"><g opacity="1"><path d="M3,1.4 H12 M1.5,3 V12.2 M13.6,3 V7.2 M3,13.4 H7.5 L9,14.2" stroke="#555" stroke-width="1" fill="none"/><rect x="0" y="0" width="2.7" height="2.7" fill="#1b84e6"/><rect x="12.2" y="0" width="2.7" height="2.7" fill="#1b84e6"/><rect x="0" y="12" width="2.7" height="2.7" fill="#1b84e6"/><path d="M9.2,14 L14.3,8.6 L16.2,10.4 L11,15.8Z" fill="#fbbd3f"/><path d="M14.3,8.6 L15.3,7.6 Q16.2,7.3 16.9,8.2 Q17.5,9 17.2,9.4 L16.2,10.4Z" fill="#f5262c"/><path d="M9.2,14 L11,15.8 L8.3,16.4Z" fill="#555"/></g></g>
<g transform="translate(268,1015)"><g opacity="1"><path d="M3,1.4 H12 M1.5,3 V12.2 M13.6,3 V7.2 M3,13.4 H7.5 L9,14.2" stroke="#555" stroke-width="1" fill="none"/><rect x="0" y="0" width="2.7" height="2.7" fill="#1b84e6"/><rect x="12.2" y="0" width="2.7" height="2.7" fill="#1b84e6"/><rect x="0" y="12" width="2.7" height="2.7" fill="#1b84e6"/><path d="M9.2,14 L14.3,8.6 L16.2,10.4 L11,15.8Z" fill="#fbbd3f"/><path d="M14.3,8.6 L15.3,7.6 Q16.2,7.3 16.9,8.2 Q17.5,9 17.2,9.4 L16.2,10.4Z" fill="#f5262c"/><path d="M9.2,14 L11,15.8 L8.3,16.4Z" fill="#555"/></g></g>
<g transform="translate(292,1015)"><g opacity="1"><path d="M0,13 H11 L14,10.5 V13 L11,16 H0Z" fill="#cfcfcf"/><path d="M0,3.5 L3,0.5 H14 V10.5 L11,13.5 H0Z" fill="#62a9e4"/><path d="M0,3.5 L3,0.5 H14 L11,3.5Z" fill="#8cc8f4"/><path d="M11,3.5 L14,0.5 V10.5 L11,13.5Z" fill="#3d8acb"/><path d="M16.5,2 V14" stroke="#222" stroke-width=".9"/><path d="M15,3.5 L16.5,0.5 L18,3.5Z" fill="#222"/></g></g>
<g transform="translate(316,1015)"><g opacity="1"><path d="M0,13 H11 L14,10.5 V13 L11,16 H0Z" fill="#cfcfcf"/><path d="M0,3.5 L3,0.5 H14 V10.5 L11,13.5 H0Z" fill="#62a9e4"/><path d="M0,3.5 L3,0.5 H14 L11,3.5Z" fill="#8cc8f4"/><path d="M11,3.5 L14,0.5 V10.5 L11,13.5Z" fill="#3d8acb"/><path d="M16.5,2 V14" stroke="#222" stroke-width=".9"/><path d="M15,3.5 L16.5,0.5 L18,3.5Z" fill="#222"/></g></g>
<g transform="translate(340,1015)"><g opacity="1"><path d="M0.5,3 L3,0.5 H15.5 V12.5 L12.5,15.5 H0.5Z" fill="#e2e2e2" stroke="#555" stroke-width=".9"/><path d="M12.5,3 L15.5,0.5 V12.5 L12.5,15.5Z" fill="#c6c6c6"/><path d="M0.5,3 H12.5 V15.5" stroke="#777" stroke-width=".6" fill="none"/><circle cx="6.8" cy="9.2" r="4.7" fill="#f4f4f4" stroke="#555" stroke-width=".9"/><circle cx="6.8" cy="9.2" r="3.7" fill="#3d8fd6"/><circle cx="8.6" cy="7.5" r="3.5" fill="#f4f4f4"/></g></g>
<g transform="translate(364,1015)"><g opacity="1"><path d="M0.5,3 L3,0.5 H15.5 V12.5 L12.5,15.5 H0.5Z" fill="#e2e2e2" stroke="#555" stroke-width=".9"/><path d="M12.5,3 L15.5,0.5 V12.5 L12.5,15.5Z" fill="#c6c6c6"/><path d="M0.5,3 H12.5 V15.5" stroke="#777" stroke-width=".6" fill="none"/><circle cx="6.8" cy="9.2" r="4.7" fill="#f4f4f4" stroke="#555" stroke-width=".9"/><circle cx="6.8" cy="9.2" r="3.7" fill="#3d8fd6"/><circle cx="8.6" cy="7.5" r="3.5" fill="#f4f4f4"/></g></g>
<g transform="translate(388,1015)"><g opacity="1"><path d="M0.5,3 L3,0.5 H15.5 V12.5 L12.5,15.5 H0.5Z" fill="#e2e2e2" stroke="#555" stroke-width=".9"/><path d="M12.5,3 L15.5,0.5 V12.5 L12.5,15.5Z" fill="#c6c6c6"/><path d="M0.5,3 H12.5 V15.5" stroke="#777" stroke-width=".6" fill="none"/><circle cx="6.8" cy="9.2" r="4.7" fill="#f4f4f4" stroke="#555" stroke-width=".9"/><circle cx="6.8" cy="9.2" r="3.7" fill="#3d8fd6"/><circle cx="8.6" cy="7.5" r="3.5" fill="#f4f4f4"/></g></g>
<g transform="translate(412,1015)"><g opacity="1"><path d="M0.5,3 L3,0.5 H15.5 V12.5 L12.5,15.5 H0.5Z" fill="#e2e2e2" stroke="#555" stroke-width=".9"/><path d="M12.5,3 L15.5,0.5 V12.5 L12.5,15.5Z" fill="#c6c6c6"/><path d="M0.5,3 H12.5 V15.5" stroke="#777" stroke-width=".6" fill="none"/><circle cx="6.8" cy="9.2" r="4.7" fill="#f4f4f4" stroke="#555" stroke-width=".9"/><circle cx="6.8" cy="9.2" r="3.7" fill="#3d8fd6"/><circle cx="8.6" cy="7.5" r="3.5" fill="#f4f4f4"/></g></g>
<g transform="translate(436,1015)"><g opacity="1"><path d="M0.5,3 L3,0.5 H15.5 V12.5 L12.5,15.5 H0.5Z" fill="#e2e2e2" stroke="#555" stroke-width=".9"/><path d="M12.5,3 L15.5,0.5 V12.5 L12.5,15.5Z" fill="#c6c6c6"/><path d="M0.5,3 H12.5 V15.5" stroke="#777" stroke-width=".6" fill="none"/><circle cx="6.8" cy="9.2" r="4.7" fill="#f4f4f4" stroke="#555" stroke-width=".9"/><circle cx="6.8" cy="9.2" r="3.7" fill="#3d8fd6"/><circle cx="8.6" cy="7.5" r="3.5" fill="#f4f4f4"/></g></g>
<g transform="translate(460,1015)"><g opacity="1"><path d="M0.5,3 L3,0.5 H15.5 V12.5 L12.5,15.5 H0.5Z" fill="#e2e2e2" stroke="#555" stroke-width=".9"/><path d="M12.5,3 L15.5,0.5 V12.5 L12.5,15.5Z" fill="#c6c6c6"/><path d="M0.5,3 H12.5 V15.5" stroke="#777" stroke-width=".6" fill="none"/><circle cx="6.8" cy="9.2" r="4.7" fill="#f4f4f4" stroke="#555" stroke-width=".9"/><circle cx="6.8" cy="9.2" r="3.7" fill="#3d8fd6"/><circle cx="8.6" cy="7.5" r="3.5" fill="#f4f4f4"/></g></g>
<g transform="translate(484,1015)"><g opacity="1"><path d="M0.5,3 L3,0.5 H15.5 V12.5 L12.5,15.5 H0.5Z" fill="#e2e2e2" stroke="#555" stroke-width=".9"/><path d="M12.5,3 L15.5,0.5 V12.5 L12.5,15.5Z" fill="#c6c6c6"/><path d="M0.5,3 H12.5 V15.5" stroke="#777" stroke-width=".6" fill="none"/><circle cx="6.8" cy="9.2" r="4.7" fill="#f4f4f4" stroke="#555" stroke-width=".9"/><circle cx="6.8" cy="9.2" r="3.7" fill="#3d8fd6"/><circle cx="8.6" cy="7.5" r="3.5" fill="#f4f4f4"/></g></g>
<g transform="translate(508,1015)"><g opacity="1"><path d="M0,13 H11 L14,10.5 V13 L11,16 H0Z" fill="#cfcfcf"/><path d="M0,3.5 L3,0.5 H14 V10.5 L11,13.5 H0Z" fill="#62a9e4"/><path d="M0,3.5 L3,0.5 H14 L11,3.5Z" fill="#8cc8f4"/><path d="M11,3.5 L14,0.5 V10.5 L11,13.5Z" fill="#3d8acb"/><path d="M16.5,2 V14" stroke="#222" stroke-width=".9"/><path d="M15,3.5 L16.5,0.5 L18,3.5Z" fill="#222"/></g></g>
<g transform="translate(532,1015)"><g opacity="1"><path d="M0.5,3.5 L3.5,0.5 H15.5 V12.5 L12.5,15.5 H0.5Z" fill="#d0d0d0" stroke="#555" stroke-width=".8"/><path d="M12.5,3.5 L15.5,0.5 V12.5 L12.5,15.5Z" fill="#b2b2b2"/><rect x="2.5" y="5.5" width="8" height="8" fill="#fff"/><path d="M2.5,5.5 H5 V11 H10.5 V13.5 H2.5Z" fill="#3d8acb"/></g></g>
<g transform="translate(556,1015)"><g opacity="1"><path d="M0.5,3.5 L3.5,0.5 H8 Q15,1 15.5,8 V12.5 L12.5,15.5 H0.5Z" fill="#d6d6d6" stroke="#555" stroke-width=".8"/><path d="M7,0.8 Q14,2 15.3,7.5 L12,9 Q11,4 7,0.8Z" fill="#5aa4e0"/></g></g>
<g transform="translate(580,1015)"><g opacity="1"><path d="M3,1.4 H12 M1.5,3 V12.2 M13.6,3 V7.2 M3,13.4 H7.5 L9,14.2" stroke="#555" stroke-width="1" fill="none"/><rect x="0" y="0" width="2.7" height="2.7" fill="#1b84e6"/><rect x="12.2" y="0" width="2.7" height="2.7" fill="#1b84e6"/><rect x="0" y="12" width="2.7" height="2.7" fill="#1b84e6"/><path d="M9.2,14 L14.3,8.6 L16.2,10.4 L11,15.8Z" fill="#fbbd3f"/><path d="M14.3,8.6 L15.3,7.6 Q16.2,7.3 16.9,8.2 Q17.5,9 17.2,9.4 L16.2,10.4Z" fill="#f5262c"/><path d="M9.2,14 L11,15.8 L8.3,16.4Z" fill="#555"/></g></g>
<g transform="translate(604,1015)"><g opacity="1"><path d="M0.5,3 L3,0.5 H15.5 V12.5 L12.5,15.5 H0.5Z" fill="#e2e2e2" stroke="#555" stroke-width=".9"/><path d="M12.5,3 L15.5,0.5 V12.5 L12.5,15.5Z" fill="#c6c6c6"/><path d="M0.5,3 H12.5 V15.5" stroke="#777" stroke-width=".6" fill="none"/><circle cx="6.8" cy="9.2" r="4.7" fill="#f4f4f4" stroke="#555" stroke-width=".9"/><circle cx="6.8" cy="9.2" r="3.7" fill="#3d8fd6"/><circle cx="8.6" cy="7.5" r="3.5" fill="#f4f4f4"/></g></g>
<g transform="translate(628,1015)"><g opacity="1"><path d="M0.5,3 L3,0.5 H15.5 V12.5 L12.5,15.5 H0.5Z" fill="#e2e2e2" stroke="#555" stroke-width=".9"/><path d="M12.5,3 L15.5,0.5 V12.5 L12.5,15.5Z" fill="#c6c6c6"/><path d="M0.5,3 H12.5 V15.5" stroke="#777" stroke-width=".6" fill="none"/><circle cx="6.8" cy="9.2" r="4.7" fill="#f4f4f4" stroke="#555" stroke-width=".9"/><circle cx="6.8" cy="9.2" r="3.7" fill="#3d8fd6"/><circle cx="8.6" cy="7.5" r="3.5" fill="#f4f4f4"/></g></g>
<g transform="translate(652,1015)"><g opacity="1"><path d="M0.5,3 L3,0.5 H15.5 V12.5 L12.5,15.5 H0.5Z" fill="#e2e2e2" stroke="#555" stroke-width=".9"/><path d="M12.5,3 L15.5,0.5 V12.5 L12.5,15.5Z" fill="#c6c6c6"/><path d="M0.5,3 H12.5 V15.5" stroke="#777" stroke-width=".6" fill="none"/><circle cx="6.8" cy="9.2" r="4.7" fill="#f4f4f4" stroke="#555" stroke-width=".9"/><circle cx="6.8" cy="9.2" r="3.7" fill="#3d8fd6"/><circle cx="8.6" cy="7.5" r="3.5" fill="#f4f4f4"/></g></g>
<g transform="translate(676,1015)"><g opacity="1"><path d="M0.5,3 L3,0.5 H15.5 V12.5 L12.5,15.5 H0.5Z" fill="#e2e2e2" stroke="#555" stroke-width=".9"/><path d="M12.5,3 L15.5,0.5 V12.5 L12.5,15.5Z" fill="#c6c6c6"/><path d="M0.5,3 H12.5 V15.5" stroke="#777" stroke-width=".6" fill="none"/><circle cx="6.8" cy="9.2" r="4.7" fill="#f4f4f4" stroke="#555" stroke-width=".9"/><circle cx="6.8" cy="9.2" r="3.7" fill="#3d8fd6"/><circle cx="8.6" cy="7.5" r="3.5" fill="#f4f4f4"/></g></g>
<g transform="translate(700,1015)"><g opacity="1"><path d="M3,1.4 H12 M1.5,3 V12.2 M13.6,3 V7.2 M3,13.4 H7.5 L9,14.2" stroke="#555" stroke-width="1" fill="none"/><rect x="0" y="0" width="2.7" height="2.7" fill="#1b84e6"/><rect x="12.2" y="0" width="2.7" height="2.7" fill="#1b84e6"/><rect x="0" y="12" width="2.7" height="2.7" fill="#1b84e6"/><path d="M9.2,14 L14.3,8.6 L16.2,10.4 L11,15.8Z" fill="#fbbd3f"/><path d="M14.3,8.6 L15.3,7.6 Q16.2,7.3 16.9,8.2 Q17.5,9 17.2,9.4 L16.2,10.4Z" fill="#f5262c"/><path d="M9.2,14 L11,15.8 L8.3,16.4Z" fill="#555"/></g></g>
<g transform="translate(724,1015)"><g opacity="1"><path d="M0,13 H11 L14,10.5 V13 L11,16 H0Z" fill="#cfcfcf"/><path d="M0,3.5 L3,0.5 H14 V10.5 L11,13.5 H0Z" fill="#62a9e4"/><path d="M0,3.5 L3,0.5 H14 L11,3.5Z" fill="#8cc8f4"/><path d="M11,3.5 L14,0.5 V10.5 L11,13.5Z" fill="#3d8acb"/><path d="M16.5,2 V14" stroke="#222" stroke-width=".9"/><path d="M15,3.5 L16.5,0.5 L18,3.5Z" fill="#222"/></g></g>
<g transform="translate(748,1015)"><g opacity="1"><path d="M0.5,3 L3,0.5 H15.5 V12.5 L12.5,15.5 H0.5Z" fill="#e2e2e2" stroke="#555" stroke-width=".9"/><path d="M12.5,3 L15.5,0.5 V12.5 L12.5,15.5Z" fill="#c6c6c6"/><path d="M0.5,3 H12.5 V15.5" stroke="#777" stroke-width=".6" fill="none"/><circle cx="6.8" cy="9.2" r="4.7" fill="#f4f4f4" stroke="#555" stroke-width=".9"/><circle cx="6.8" cy="9.2" r="3.7" fill="#3d8fd6"/><circle cx="8.6" cy="7.5" r="3.5" fill="#f4f4f4"/></g></g>
<g transform="translate(772,1015)"><g opacity="1"><path d="M0.5,3 L3,0.5 H15.5 V12.5 L12.5,15.5 H0.5Z" fill="#e2e2e2" stroke="#555" stroke-width=".9"/><path d="M12.5,3 L15.5,0.5 V12.5 L12.5,15.5Z" fill="#c6c6c6"/><path d="M0.5,3 H12.5 V15.5" stroke="#777" stroke-width=".6" fill="none"/><circle cx="6.8" cy="9.2" r="4.7" fill="#f4f4f4" stroke="#555" stroke-width=".9"/><circle cx="6.8" cy="9.2" r="3.7" fill="#3d8fd6"/><circle cx="8.6" cy="7.5" r="3.5" fill="#f4f4f4"/></g></g>
<g transform="translate(796,1015)"><g opacity="1"><path d="M0.5,3 L3,0.5 H15.5 V12.5 L12.5,15.5 H0.5Z" fill="#e2e2e2" stroke="#555" stroke-width=".9"/><path d="M12.5,3 L15.5,0.5 V12.5 L12.5,15.5Z" fill="#c6c6c6"/><path d="M0.5,3 H12.5 V15.5" stroke="#777" stroke-width=".6" fill="none"/><circle cx="6.8" cy="9.2" r="4.7" fill="#f4f4f4" stroke="#555" stroke-width=".9"/><circle cx="6.8" cy="9.2" r="3.7" fill="#3d8fd6"/><circle cx="8.6" cy="7.5" r="3.5" fill="#f4f4f4"/></g></g>
<g transform="translate(820,1015)"><g opacity="1"><path d="M0.5,3 L3,0.5 H15.5 V12.5 L12.5,15.5 H0.5Z" fill="#e2e2e2" stroke="#555" stroke-width=".9"/><path d="M12.5,3 L15.5,0.5 V12.5 L12.5,15.5Z" fill="#c6c6c6"/><path d="M0.5,3 H12.5 V15.5" stroke="#777" stroke-width=".6" fill="none"/><circle cx="6.8" cy="9.2" r="4.7" fill="#f4f4f4" stroke="#555" stroke-width=".9"/><circle cx="6.8" cy="9.2" r="3.7" fill="#3d8fd6"/><circle cx="8.6" cy="7.5" r="3.5" fill="#f4f4f4"/></g></g>
<g transform="translate(844,1015)"><g opacity="1"><path d="M3,1.4 H12 M1.5,3 V12.2 M13.6,3 V7.2 M3,13.4 H7.5 L9,14.2" stroke="#555" stroke-width="1" fill="none"/><rect x="0" y="0" width="2.7" height="2.7" fill="#1b84e6"/><rect x="12.2" y="0" width="2.7" height="2.7" fill="#1b84e6"/><rect x="0" y="12" width="2.7" height="2.7" fill="#1b84e6"/><path d="M9.2,14 L14.3,8.6 L16.2,10.4 L11,15.8Z" fill="#fbbd3f"/><path d="M14.3,8.6 L15.3,7.6 Q16.2,7.3 16.9,8.2 Q17.5,9 17.2,9.4 L16.2,10.4Z" fill="#f5262c"/><path d="M9.2,14 L11,15.8 L8.3,16.4Z" fill="#555"/></g></g>
<g transform="translate(868,1015)"><g opacity="1"><path d="M0,13 H11 L14,10.5 V13 L11,16 H0Z" fill="#cfcfcf"/><path d="M0,3.5 L3,0.5 H14 V10.5 L11,13.5 H0Z" fill="#62a9e4"/><path d="M0,3.5 L3,0.5 H14 L11,3.5Z" fill="#8cc8f4"/><path d="M11,3.5 L14,0.5 V10.5 L11,13.5Z" fill="#3d8acb"/><path d="M16.5,2 V14" stroke="#222" stroke-width=".9"/><path d="M15,3.5 L16.5,0.5 L18,3.5Z" fill="#222"/></g></g>
<g transform="translate(892,1015)"><g opacity="1"><path d="M0.5,3 L3,0.5 H4.5 V13 L2,15.5 H0.5Z" fill="#e3e3e3" stroke="#555" stroke-width=".7"/><path d="M4.5,3 L8,0.5 V12.5 L4.5,15.5Z" fill="#56b86a" stroke="#555" stroke-width=".6"/><path d="M10,4 L15.5,0.5 V11.5 L10,15Z" fill="#e39a62"/></g></g>
<g transform="translate(916,1015)"><g opacity="1"><path d="M3,1.4 H12 M1.5,3 V12.2 M13.6,3 V7.2 M3,13.4 H7.5 L9,14.2" stroke="#555" stroke-width="1" fill="none"/><rect x="0" y="0" width="2.7" height="2.7" fill="#1b84e6"/><rect x="12.2" y="0" width="2.7" height="2.7" fill="#1b84e6"/><rect x="0" y="12" width="2.7" height="2.7" fill="#1b84e6"/><path d="M9.2,14 L14.3,8.6 L16.2,10.4 L11,15.8Z" fill="#fbbd3f"/><path d="M14.3,8.6 L15.3,7.6 Q16.2,7.3 16.9,8.2 Q17.5,9 17.2,9.4 L16.2,10.4Z" fill="#f5262c"/><path d="M9.2,14 L11,15.8 L8.3,16.4Z" fill="#555"/></g></g>
<g transform="translate(940,1015)"><g opacity="1"><path d="M0,13 H11 L14,10.5 V13 L11,16 H0Z" fill="#cfcfcf"/><path d="M0,3.5 L3,0.5 H14 V10.5 L11,13.5 H0Z" fill="#62a9e4"/><path d="M0,3.5 L3,0.5 H14 L11,3.5Z" fill="#8cc8f4"/><path d="M11,3.5 L14,0.5 V10.5 L11,13.5Z" fill="#3d8acb"/><path d="M16.5,2 V14" stroke="#222" stroke-width=".9"/><path d="M15,3.5 L16.5,0.5 L18,3.5Z" fill="#222"/></g></g>
<g transform="translate(964,1015)"><g opacity="1"><path d="M0.5,3 L3,0.5 H4.5 V13 L2,15.5 H0.5Z" fill="#e3e3e3" stroke="#555" stroke-width=".7"/><path d="M4.5,3 L8,0.5 V12.5 L4.5,15.5Z" fill="#56b86a" stroke="#555" stroke-width=".6"/><path d="M10,4 L15.5,0.5 V11.5 L10,15Z" fill="#e39a62"/></g></g>
<g transform="translate(988,1015)"><g opacity="1"><path d="M0.5,9.5 H12.5 L15.5,7 V13.5 L12.5,15.5 H0.5Z" fill="#d0d0d0" stroke="#555" stroke-width=".7"/><path d="M0,3 L2.5,0.5 H14.5 V7 L11.5,9.5 H0Z" fill="#62a9e4"/><path d="M0,3 L2.5,0.5 H14.5 L11.5,3Z" fill="#8cc8f4"/><path d="M0,9.2 H12 L16,5.5" stroke="#1e90e8" stroke-width="1" fill="none"/></g></g>
<g transform="translate(1012,1015)"><g opacity="1"><path d="M3,1.4 H12 M1.5,3 V12.2 M13.6,3 V7.2 M3,13.4 H7.5 L9,14.2" stroke="#555" stroke-width="1" fill="none"/><rect x="0" y="0" width="2.7" height="2.7" fill="#1b84e6"/><rect x="12.2" y="0" width="2.7" height="2.7" fill="#1b84e6"/><rect x="0" y="12" width="2.7" height="2.7" fill="#1b84e6"/><path d="M9.2,14 L14.3,8.6 L16.2,10.4 L11,15.8Z" fill="#fbbd3f"/><path d="M14.3,8.6 L15.3,7.6 Q16.2,7.3 16.9,8.2 Q17.5,9 17.2,9.4 L16.2,10.4Z" fill="#f5262c"/><path d="M9.2,14 L11,15.8 L8.3,16.4Z" fill="#555"/></g></g>
<g transform="translate(1036,1015)"><g opacity="1"><path d="M0,13 H11 L14,10.5 V13 L11,16 H0Z" fill="#cfcfcf"/><path d="M0,3.5 L3,0.5 H14 V10.5 L11,13.5 H0Z" fill="#62a9e4"/><path d="M0,3.5 L3,0.5 H14 L11,3.5Z" fill="#8cc8f4"/><path d="M11,3.5 L14,0.5 V10.5 L11,13.5Z" fill="#3d8acb"/><path d="M16.5,2 V14" stroke="#222" stroke-width=".9"/><path d="M15,3.5 L16.5,0.5 L18,3.5Z" fill="#222"/></g></g>
<g transform="translate(1060,1015)"><g opacity="1"><path d="M3,1.4 H12 M1.5,3 V12.2 M13.6,3 V7.2 M3,13.4 H7.5 L9,14.2" stroke="#555" stroke-width="1" fill="none"/><rect x="0" y="0" width="2.7" height="2.7" fill="#1b84e6"/><rect x="12.2" y="0" width="2.7" height="2.7" fill="#1b84e6"/><rect x="0" y="12" width="2.7" height="2.7" fill="#1b84e6"/><path d="M9.2,14 L14.3,8.6 L16.2,10.4 L11,15.8Z" fill="#fbbd3f"/><path d="M14.3,8.6 L15.3,7.6 Q16.2,7.3 16.9,8.2 Q17.5,9 17.2,9.4 L16.2,10.4Z" fill="#f5262c"/><path d="M9.2,14 L11,15.8 L8.3,16.4Z" fill="#555"/></g></g>
<g transform="translate(1084,1015)"><g opacity="1"><path d="M0,13 H11 L14,10.5 V13 L11,16 H0Z" fill="#cfcfcf"/><path d="M0,3.5 L3,0.5 H14 V10.5 L11,13.5 H0Z" fill="#62a9e4"/><path d="M0,3.5 L3,0.5 H14 L11,3.5Z" fill="#8cc8f4"/><path d="M11,3.5 L14,0.5 V10.5 L11,13.5Z" fill="#3d8acb"/><path d="M16.5,2 V14" stroke="#222" stroke-width=".9"/><path d="M15,3.5 L16.5,0.5 L18,3.5Z" fill="#222"/></g></g>
<g transform="translate(1108,1015)"><g opacity="1"><path d="M3,1.4 H12 M1.5,3 V12.2 M13.6,3 V7.2 M3,13.4 H7.5 L9,14.2" stroke="#555" stroke-width="1" fill="none"/><rect x="0" y="0" width="2.7" height="2.7" fill="#1b84e6"/><rect x="12.2" y="0" width="2.7" height="2.7" fill="#1b84e6"/><rect x="0" y="12" width="2.7" height="2.7" fill="#1b84e6"/><path d="M9.2,14 L14.3,8.6 L16.2,10.4 L11,15.8Z" fill="#fbbd3f"/><path d="M14.3,8.6 L15.3,7.6 Q16.2,7.3 16.9,8.2 Q17.5,9 17.2,9.4 L16.2,10.4Z" fill="#f5262c"/><path d="M9.2,14 L11,15.8 L8.3,16.4Z" fill="#555"/></g></g>
<g transform="translate(1132,1015)"><g opacity="1"><path d="M0,13 H11 L14,10.5 V13 L11,16 H0Z" fill="#cfcfcf"/><path d="M0,3.5 L3,0.5 H14 V10.5 L11,13.5 H0Z" fill="#62a9e4"/><path d="M0,3.5 L3,0.5 H14 L11,3.5Z" fill="#8cc8f4"/><path d="M11,3.5 L14,0.5 V10.5 L11,13.5Z" fill="#3d8acb"/><path d="M16.5,2 V14" stroke="#222" stroke-width=".9"/><path d="M15,3.5 L16.5,0.5 L18,3.5Z" fill="#222"/></g></g>
<g transform="translate(1156,1015)"><g opacity="1"><path d="M3,1.4 H12 M1.5,3 V12.2 M13.6,3 V7.2 M3,13.4 H7.5 L9,14.2" stroke="#555" stroke-width="1" fill="none"/><rect x="0" y="0" width="2.7" height="2.7" fill="#1b84e6"/><rect x="12.2" y="0" width="2.7" height="2.7" fill="#1b84e6"/><rect x="0" y="12" width="2.7" height="2.7" fill="#1b84e6"/><path d="M9.2,14 L14.3,8.6 L16.2,10.4 L11,15.8Z" fill="#fbbd3f"/><path d="M14.3,8.6 L15.3,7.6 Q16.2,7.3 16.9,8.2 Q17.5,9 17.2,9.4 L16.2,10.4Z" fill="#f5262c"/><path d="M9.2,14 L11,15.8 L8.3,16.4Z" fill="#555"/></g></g>
<g transform="translate(1180,1015)"><g opacity="1"><path d="M0,13 H11 L14,10.5 V13 L11,16 H0Z" fill="#cfcfcf"/><path d="M0,3.5 L3,0.5 H14 V10.5 L11,13.5 H0Z" fill="#62a9e4"/><path d="M0,3.5 L3,0.5 H14 L11,3.5Z" fill="#8cc8f4"/><path d="M11,3.5 L14,0.5 V10.5 L11,13.5Z" fill="#3d8acb"/><path d="M16.5,2 V14" stroke="#222" stroke-width=".9"/><path d="M15,3.5 L16.5,0.5 L18,3.5Z" fill="#222"/></g></g>
<g transform="translate(1204,1015)"><g opacity="1"><path d="M0.5,3 L3,0.5 H15.5 V12.5 L12.5,15.5 H0.5Z" fill="#e2e2e2" stroke="#555" stroke-width=".9"/><path d="M12.5,3 L15.5,0.5 V12.5 L12.5,15.5Z" fill="#c6c6c6"/><path d="M0.5,3 H12.5 V15.5" stroke="#777" stroke-width=".6" fill="none"/><circle cx="6.8" cy="9.2" r="4.7" fill="#f4f4f4" stroke="#555" stroke-width=".9"/><circle cx="6.8" cy="9.2" r="3.7" fill="#3d8fd6"/><circle cx="8.6" cy="7.5" r="3.5" fill="#f4f4f4"/></g></g>
<g transform="translate(1228,1015)"><g opacity="1"><path d="M6,2.5 L8.5,0.3 H16.5 V10 L14,12.5 V3.5 H6Z" fill="#3d8fd6"/><path d="M13.2,3.2 L16.5,0.3 V10 L13.2,12.8Z" fill="#2f78bf"/><rect x="0.8" y="3.8" width="12.6" height="12.4" fill="#fff" stroke="#444" stroke-width="1.4"/><rect x="3.5" y="6.5" width="7.2" height="7" fill="#fff" stroke="#444" stroke-width="1.4"/></g></g>
<g transform="translate(1252,1015)"><g opacity="1"><path d="M6,2.5 L8.5,0.3 H16.5 V10 L14,12.5 V3.5 H6Z" fill="#3d8fd6"/><path d="M13.2,3.2 L16.5,0.3 V10 L13.2,12.8Z" fill="#2f78bf"/><rect x="0.8" y="3.8" width="12.6" height="12.4" fill="#fff" stroke="#444" stroke-width="1.4"/><rect x="3.5" y="6.5" width="7.2" height="7" fill="#fff" stroke="#444" stroke-width="1.4"/></g></g>
<g transform="translate(1276,1015)"><g opacity="0.32"><path d="M6,2.5 L8.5,0.3 H16.5 V10 L14,12.5 V3.5 H6Z" fill="#3d8fd6"/><path d="M13.2,3.2 L16.5,0.3 V10 L13.2,12.8Z" fill="#2f78bf"/><rect x="0.8" y="3.8" width="12.6" height="12.4" fill="#fff" stroke="#444" stroke-width="1.4"/><rect x="3.5" y="6.5" width="7.2" height="7" fill="#fff" stroke="#444" stroke-width="1.4"/></g></g>
<g transform="translate(1300,1015)"><g opacity="0.32"><path d="M0.5,3 L3,0.5 H15.5 V12.5 L12.5,15.5 H0.5Z" fill="#e2e2e2" stroke="#555" stroke-width=".9"/><path d="M12.5,3 L15.5,0.5 V12.5 L12.5,15.5Z" fill="#c6c6c6"/><path d="M0.5,3 H12.5 V15.5" stroke="#777" stroke-width=".6" fill="none"/><circle cx="6.8" cy="9.2" r="4.7" fill="#f4f4f4" stroke="#555" stroke-width=".9"/><circle cx="6.8" cy="9.2" r="3.7" fill="#3d8fd6"/><circle cx="8.6" cy="7.5" r="3.5" fill="#f4f4f4"/></g></g>
<g transform="translate(1324,1015)"><g opacity="0.32"><path d="M3,1.4 H12 M1.5,3 V12.2 M13.6,3 V7.2 M3,13.4 H7.5 L9,14.2" stroke="#555" stroke-width="1" fill="none"/><rect x="0" y="0" width="2.7" height="2.7" fill="#1b84e6"/><rect x="12.2" y="0" width="2.7" height="2.7" fill="#1b84e6"/><rect x="0" y="12" width="2.7" height="2.7" fill="#1b84e6"/><path d="M9.2,14 L14.3,8.6 L16.2,10.4 L11,15.8Z" fill="#fbbd3f"/><path d="M14.3,8.6 L15.3,7.6 Q16.2,7.3 16.9,8.2 Q17.5,9 17.2,9.4 L16.2,10.4Z" fill="#f5262c"/><path d="M9.2,14 L11,15.8 L8.3,16.4Z" fill="#555"/></g></g>
<g transform="translate(1372,1015)"><g opacity="0.32"><path d="M3,1.4 H12 M1.5,3 V12.2 M13.6,3 V7.2 M3,13.4 H7.5 L9,14.2" stroke="#555" stroke-width="1" fill="none"/><rect x="0" y="0" width="2.7" height="2.7" fill="#1b84e6"/><rect x="12.2" y="0" width="2.7" height="2.7" fill="#1b84e6"/><rect x="0" y="12" width="2.7" height="2.7" fill="#1b84e6"/><path d="M9.2,14 L14.3,8.6 L16.2,10.4 L11,15.8Z" fill="#fbbd3f"/><path d="M14.3,8.6 L15.3,7.6 Q16.2,7.3 16.9,8.2 Q17.5,9 17.2,9.4 L16.2,10.4Z" fill="#f5262c"/><path d="M9.2,14 L11,15.8 L8.3,16.4Z" fill="#555"/></g></g>
<g transform="translate(1396,1015)"><g opacity="0.32"><path d="M3,1.4 H12 M1.5,3 V12.2 M13.6,3 V7.2 M3,13.4 H7.5 L9,14.2" stroke="#555" stroke-width="1" fill="none"/><rect x="0" y="0" width="2.7" height="2.7" fill="#1b84e6"/><rect x="12.2" y="0" width="2.7" height="2.7" fill="#1b84e6"/><rect x="0" y="12" width="2.7" height="2.7" fill="#1b84e6"/><path d="M9.2,14 L14.3,8.6 L16.2,10.4 L11,15.8Z" fill="#fbbd3f"/><path d="M14.3,8.6 L15.3,7.6 Q16.2,7.3 16.9,8.2 Q17.5,9 17.2,9.4 L16.2,10.4Z" fill="#f5262c"/><path d="M9.2,14 L11,15.8 L8.3,16.4Z" fill="#555"/></g></g>
<g transform="translate(1420,1015)"><g opacity="0.32"><path d="M3,1.4 H12 M1.5,3 V12.2 M13.6,3 V7.2 M3,13.4 H7.5 L9,14.2" stroke="#555" stroke-width="1" fill="none"/><rect x="0" y="0" width="2.7" height="2.7" fill="#1b84e6"/><rect x="12.2" y="0" width="2.7" height="2.7" fill="#1b84e6"/><rect x="0" y="12" width="2.7" height="2.7" fill="#1b84e6"/><path d="M9.2,14 L14.3,8.6 L16.2,10.4 L11,15.8Z" fill="#fbbd3f"/><path d="M14.3,8.6 L15.3,7.6 Q16.2,7.3 16.9,8.2 Q17.5,9 17.2,9.4 L16.2,10.4Z" fill="#f5262c"/><path d="M9.2,14 L11,15.8 L8.3,16.4Z" fill="#555"/></g></g>
<g transform="translate(1444,1015)"><g opacity="0.32"><path d="M0,13 H11 L14,10.5 V13 L11,16 H0Z" fill="#cfcfcf"/><path d="M0,3.5 L3,0.5 H14 V10.5 L11,13.5 H0Z" fill="#62a9e4"/><path d="M0,3.5 L3,0.5 H14 L11,3.5Z" fill="#8cc8f4"/><path d="M11,3.5 L14,0.5 V10.5 L11,13.5Z" fill="#3d8acb"/><path d="M16.5,2 V14" stroke="#222" stroke-width=".9"/><path d="M15,3.5 L16.5,0.5 L18,3.5Z" fill="#222"/></g></g>
<g transform="translate(1468,1015)"><g opacity="0.32"><path d="M8,2 V14 M2,8 H14" stroke="#333" stroke-width="1"/><path d="M8,0 L10.5,3 H5.5Z M8,16 L10.5,13 H5.5Z M0,8 L3,5.5 V10.5Z M16,8 L13,5.5 V10.5Z" fill="#333"/></g></g>
<rect x="1344" y="1011" width="24" height="24" rx="3" fill="#fb4548"/>
<g transform="translate(1348,1015)"><path d="M1,10 H12.5 L15,8 V13.5 L12.5,15.5 H1Z" fill="#e86468"/><path d="M1,3 L3.5,0.5 H15 V6.5 L12.5,9 H1Z" fill="#d05060"/><path d="M1,3 L3.5,0.5 H15 L12.5,3Z" fill="#e07080"/><path d="M0,9.3 H12 L15.5,6.2" stroke="#a04a70" stroke-width="1" fill="none"/></g>
<rect x="155" y="1039" width="1322" height="2" fill="#c8c8c8"/>
<rect x="155" y="1034" width="2" height="5" fill="#c8c8c8"/><rect x="179" y="1034" width="2" height="5" fill="#c8c8c8"/><rect x="203" y="1034" width="2" height="5" fill="#c8c8c8"/><rect x="227" y="1034" width="2" height="5" fill="#c8c8c8"/><rect x="251" y="1034" width="2" height="5" fill="#c8c8c8"/><rect x="275" y="1034" width="2" height="5" fill="#c8c8c8"/><rect x="299" y="1034" width="2" height="5" fill="#c8c8c8"/><rect x="323" y="1034" width="2" height="5" fill="#c8c8c8"/><rect x="347" y="1034" width="2" height="5" fill="#c8c8c8"/><rect x="371" y="1034" width="2" height="5" fill="#c8c8c8"/><rect x="395" y="1034" width="2" height="5" fill="#c8c8c8"/><rect x="419" y="1034" width="2" height="5" fill="#c8c8c8"/><rect x="443" y="1034" width="2" height="5" fill="#c8c8c8"/><rect x="467" y="1034" width="2" height="5" fill="#c8c8c8"/><rect x="491" y="1034" width="2" height="5" fill="#c8c8c8"/><rect x="515" y="1034" width="2" height="5" fill="#c8c8c8"/><rect x="539" y="1034" width="2" height="5" fill="#c8c8c8"/><rect x="563" y="1034" width="2" height="5" fill="#c8c8c8"/><rect x="587" y="1034" width="2" height="5" fill="#c8c8c8"/><rect x="611" y="1034" width="2" height="5" fill="#c8c8c8"/><rect x="635" y="1034" width="2" height="5" fill="#c8c8c8"/><rect x="659" y="1034" width="2" height="5" fill="#c8c8c8"/><rect x="683" y="1034" width="2" height="5" fill="#c8c8c8"/><rect x="707" y="1034" width="2" height="5" fill="#c8c8c8"/><rect x="731" y="1034" width="2" height="5" fill="#c8c8c8"/><rect x="755" y="1034" width="2" height="5" fill="#c8c8c8"/><rect x="779" y="1034" width="2" height="5" fill="#c8c8c8"/><rect x="803" y="1034" width="2" height="5" fill="#c8c8c8"/><rect x="827" y="1034" width="2" height="5" fill="#c8c8c8"/><rect x="851" y="1034" width="2" height="5" fill="#c8c8c8"/><rect x="875" y="1034" width="2" height="5" fill="#c8c8c8"/><rect x="899" y="1034" width="2" height="5" fill="#c8c8c8"/><rect x="923" y="1034" width="2" height="5" fill="#c8c8c8"/><rect x="947" y="1034" width="2" height="5" fill="#c8c8c8"/><rect x="971" y="1034" width="2" height="5" fill="#c8c8c8"/><rect x="995" y="1034" width="2" height="5" fill="#c8c8c8"/><rect x="1019" y="1034" width="2" height="5" fill="#c8c8c8"/><rect x="1043" y="1034" width="2" height="5" fill="#c8c8c8"/><rect x="1067" y="1034" width="2" height="5" fill="#c8c8c8"/><rect x="1091" y="1034" width="2" height="5" fill="#c8c8c8"/><rect x="1115" y="1034" width="2" height="5" fill="#c8c8c8"/><rect x="1139" y="1034" width="2" height="5" fill="#c8c8c8"/><rect x="1163" y="1034" width="2" height="5" fill="#c8c8c8"/><rect x="1187" y="1034" width="2" height="5" fill="#c8c8c8"/><rect x="1211" y="1034" width="2" height="5" fill="#c8c8c8"/><rect x="1235" y="1034" width="2" height="5" fill="#c8c8c8"/><rect x="1259" y="1034" width="2" height="5" fill="#c8c8c8"/><rect x="1283" y="1034" width="2" height="5" fill="#c8c8c8"/><rect x="1307" y="1034" width="2" height="5" fill="#c8c8c8"/><rect x="1331" y="1034" width="2" height="5" fill="#c8c8c8"/><rect x="1355" y="1034" width="2" height="5" fill="#c8c8c8"/><rect x="1379" y="1034" width="2" height="5" fill="#c8c8c8"/><rect x="1403" y="1034" width="2" height="5" fill="#c8c8c8"/><rect x="1427" y="1034" width="2" height="5" fill="#c8c8c8"/><rect x="1451" y="1034" width="2" height="5" fill="#c8c8c8"/><rect x="1475" y="1034" width="2" height="5" fill="#c8c8c8"/>
<rect x="1475" y="1034" width="2" height="6" fill="#c8c8c8"/>
<path d="M1265,1009 H1278 V1013 L1272.5,1020 V1040 H1270.5 V1020 L1265,1013Z" fill="#555"/>
<g transform="translate(1897,1024)" fill="#7a7a7a"><circle r="5.5"/><rect x="-1.6" y="-8" width="3.2" height="16" transform="rotate(0)"/><rect x="-1.6" y="-8" width="3.2" height="16" transform="rotate(45)"/><rect x="-1.6" y="-8" width="3.2" height="16" transform="rotate(90)"/><rect x="-1.6" y="-8" width="3.2" height="16" transform="rotate(135)"/><circle r="2.6" fill="#f1f1f1"/></g>
</svg><svg class="a" style="left:0;top:1050px" width="1920" height="30" viewBox="0 1050 1920 30">
<g fill="#fff"><path d="M10,1059.3 L16.8,1058.3 V1064.6 H10Z"/><path d="M17.6,1058.2 L26.2,1057 V1064.6 H17.6Z"/><path d="M10,1065.4 H16.8 V1071.8 L10,1070.8Z"/><path d="M17.6,1065.4 H26.2 V1073 L17.6,1071.9Z"/></g>
<circle cx="56.5" cy="1062.5" r="5" fill="none" stroke="#fff" stroke-width="1.3"/><path d="M53,1066.5 L47,1072.5" stroke="#fff" stroke-width="1.5"/>
<circle cx="89.75" cy="1065" r="6.7" fill="none" stroke="#fff" stroke-width="1.6"/>
<g fill="none" stroke="#fff" stroke-width="1.1"><rect x="119.5" y="1061" width="9" height="8"/><path d="M117.5,1058.5 H130.5 M117.5,1071.5 H130.5"/><path d="M132.5,1059 V1063 M132.5,1065 V1069"/></g>
<path d="M157,1058 H163 L164.5,1059.5 H173 V1072 H157Z" fill="#ffd966"/><path d="M157,1058 H163 L164.5,1060 H157Z" fill="#e0a000"/><path d="M160,1073 V1066 Q160,1065 161,1065 H169 Q170,1065 170,1066 V1073 H167.5 V1068 H162.5 V1073Z" fill="#3f9ae8"/>
<rect x="151" y="1078" width="28" height="2" fill="#f5a3ab"/>
<g transform="translate(202.5,1065)"><circle r="7.5" fill="#db4437"/><path d="M0,0 L-6.5,3.75 A7.5,7.5 0 0 0 3.75,6.5Z" fill="#0f9d58"/><path d="M0,0 L3.75,6.5 A7.5,7.5 0 0 0 6.5,-3.75 L0,-3.75Z" fill="#f4b400"/><path d="M0,0 L-6.5,3.75 A7.5,7.5 0 0 1 -5.2,-5.4 L0,-3.75Z" fill="#db4437"/><circle r="3.6" fill="#fff"/><circle r="2.7" fill="#4285f4"/></g>
<g transform="translate(239,1065)"><circle r="7.5" fill="#db4437"/><path d="M0,0 L-6.5,3.75 A7.5,7.5 0 0 0 3.75,6.5Z" fill="#0f9d58"/><path d="M0,0 L3.75,6.5 A7.5,7.5 0 0 0 6.5,-3.75 L0,-3.75Z" fill="#f4b400"/><path d="M0,0 L-6.5,3.75 A7.5,7.5 0 0 1 -5.2,-5.4 L0,-3.75Z" fill="#db4437"/><circle r="3.6" fill="#fff"/><circle r="2.7" fill="#4285f4"/></g>
<g transform="translate(276,1065)"><circle r="7.5" fill="#db4437"/><path d="M0,0 L-6.5,3.75 A7.5,7.5 0 0 0 3.75,6.5Z" fill="#0f9d58"/><path d="M0,0 L3.75,6.5 A7.5,7.5 0 0 0 6.5,-3.75 L0,-3.75Z" fill="#f4b400"/><path d="M0,0 L-6.5,3.75 A7.5,7.5 0 0 1 -5.2,-5.4 L0,-3.75Z" fill="#db4437"/><circle r="3.6" fill="#fff"/><circle r="2.7" fill="#4285f4"/></g>
<circle cx="208" cy="1070" r="3" fill="#556"/><circle cx="281" cy="1070" r="3" fill="#a88"/>
<rect x="305" y="1057" width="16" height="16" fill="#00005b" stroke="#9999ff" stroke-width="1"/><text x="313" y="1069" font-family="Liberation Sans" font-size="9" fill="#9999ff" text-anchor="middle">Ae</text>
<circle cx="349.75" cy="1065" r="7.5" fill="#2a2f3a" stroke="#555" stroke-width="1"/><circle cx="349.75" cy="1062" r="2.3" fill="#3fa9f5"/><circle cx="347" cy="1067" r="2.3" fill="#f5d33f"/><circle cx="352.5" cy="1067" r="2.3" fill="#ff4e4e"/>
<rect x="379" y="1057" width="16" height="16" fill="#2a0030" stroke="#ea77ff" stroke-width="1"/><text x="387" y="1069" font-family="Liberation Sans" font-size="9" fill="#ea77ff" text-anchor="middle">Pr</text>
<path d="M418,1057 H426.5 L430.5,1061 V1073 H418Z" fill="#f2f2f2"/>
<rect x="453" y="1057" width="16" height="16" fill="#330000" stroke="#ff9a00" stroke-width="1"/><text x="461" y="1069" font-family="Liberation Sans" font-size="9" fill="#ff9a00" text-anchor="middle">Ai</text>
<rect x="490" y="1057" width="16" height="16" fill="#001e36" stroke="#31a8ff" stroke-width="1"/><text x="498" y="1069" font-family="Liberation Sans" font-size="9" fill="#31a8ff" text-anchor="middle">Ps</text>
<rect x="517" y="1050" width="36" height="30" fill="#3c3f41"/><rect x="517" y="1078" width="36" height="2" fill="#f5a3ab"/>
<rect x="526.5" y="1057" width="16.5" height="16.5" fill="#fbe2c8"/><path d="M530.5,1060 H538 V1062.5 H533.3 V1064.3 H537 V1066.5 H533.3 V1070 H530.5Z" fill="#e07b1f"/>
<circle cx="572" cy="1065" r="8" fill="#00979c"/><g fill="none" stroke="#fff" stroke-width="1.4"><circle cx="568.5" cy="1065" r="2.6"/><circle cx="575.5" cy="1065" r="2.6"/></g>
<rect x="601" y="1059" width="16" height="12" rx="3" fill="#b8c4d0"/><circle cx="609" cy="1065" r="4" fill="#e8eef4" stroke="#556" stroke-width="1"/>
<path d="M641,1057.5 L650,1065 L641,1072.5 L643.5,1065Z" fill="#2a8ff7"/>
<rect x="675" y="1057" width="16" height="16" fill="#b71c1c"/><path d="M684.5,1058.5 L679,1066 H683 L681.5,1071.5 L687.5,1064 H683.5Z" fill="#fff"/>
<path d="M720,1057 L727.5,1072 H712.5Z" fill="#f57c00"/><path d="M716.5,1064 H723.5 M715,1068 H725" stroke="#fff" stroke-width="1.3"/>
<rect x="749" y="1057" width="16" height="16" rx="2" fill="#4a7fe0"/><path d="M752,1068 Q751,1063 755,1063 Q757,1059 761,1062 Q764,1062 763,1067 Z" fill="none" stroke="#fff" stroke-width="1.1"/>
<ellipse cx="793.75" cy="1065" rx="8" ry="8" fill="#ff1b2d"/><ellipse cx="793.75" cy="1065" rx="3" ry="5.6" fill="#1d2021"/>
<path d="M825,1057 H833 L837,1061 V1073 H825Z" fill="#f2f2f2"/>
<circle cx="868" cy="1065" r="8" fill="#1ed760"/><g fill="none" stroke="#1d2021" stroke-width="1.3"><path d="M863,1062.5 Q868,1061 873,1063.5"/><path d="M863.5,1065.5 Q868,1064.5 872,1066.5"/><path d="M864,1068.3 Q868,1067.5 871,1069"/></g>
<rect x="897" y="1057" width="16" height="16" fill="#4a3ab8"/><path d="M899,1063 H911 M899,1067 H911" stroke="#8fa0ff" stroke-width="1"/>
<g transform="translate(941.25,1065)" fill="#fff"><circle r="5"/><rect x="-1.5" y="-7.5" width="3" height="15" transform="rotate(0)"/><rect x="-1.5" y="-7.5" width="3" height="15" transform="rotate(45)"/><rect x="-1.5" y="-7.5" width="3" height="15" transform="rotate(90)"/><rect x="-1.5" y="-7.5" width="3" height="15" transform="rotate(135)"/><circle r="2.2" fill="#1d2021"/></g>
<rect x="928" y="1078" width="28" height="2" fill="#f5a3ab"/>
<path d="M1716.5,1068.5 L1722,1062.5 L1727.5,1068.5" fill="none" stroke="#fff" stroke-width="1.2"/>
<g fill="none" stroke="#fff" stroke-width="1"><rect x="1742" y="1059.5" width="12" height="8.5"/><path d="M1748,1068 V1071.5 M1744.5,1071.5 H1751.5"/><rect x="1738" y="1058.5" width="4" height="4"/></g>
<g fill="none" stroke="#fff" stroke-width="1"><rect x="1765" y="1062" width="8" height="10.5"/><rect x="1766.5" y="1058" width="5" height="4"/></g><path d="M1773,1071 L1775,1073 L1778,1068" fill="none" stroke="#ccc" stroke-width=".9"/>
<g fill="none" stroke="#fff" stroke-width="1"><path d="M1786,1062.5 H1789 L1793,1059 V1071 L1789,1067.5 H1786Z"/><path d="M1795.5,1062 Q1797.5,1065 1795.5,1068 M1797.5,1060 Q1800.5,1065 1797.5,1070 M1799.5,1058.5 Q1803.5,1065 1799.5,1071.5"/></g>
<text x="1812.5" y="1069" font-family="Liberation Sans" font-size="11.4" fill="#fff">12:48 AM</text>
<path d="M1879,1057 H1895.5 V1070 H1890.5 L1887.5,1073 L1886,1070 H1879Z" fill="#fff"/><path d="M1882,1060.5 H1892.5 M1882,1063 H1892.5 M1882,1065.5 H1889" stroke="#1d2021" stroke-width="1"/>
<rect x="1915" y="1050" width="1" height="30" fill="#666"/>
</svg>
</body></html>
